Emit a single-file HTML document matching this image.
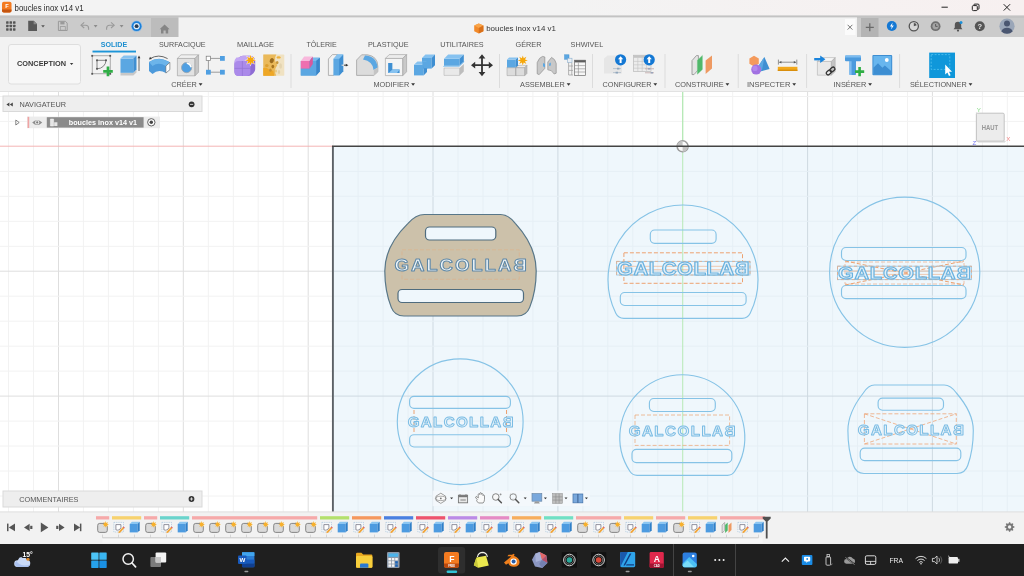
<!DOCTYPE html>
<html lang="fr"><head><meta charset="utf-8"><title>boucles inox v14 v1</title>
<style>
html,body{margin:0;padding:0;background:#fff;}
body{width:1024px;height:576px;overflow:hidden;position:relative;font-family:"Liberation Sans", Arial, sans-serif;}
#app{position:absolute;left:0;top:0;width:1024px;height:576px;overflow:hidden;background:#fff;}
.sec{position:absolute;left:0;width:1024px;}
#titlebar{top:0;height:16px;background:linear-gradient(90deg,#f3f3f3 0%,#f3f3f3 55%,#f7f0f0 100%);}
#tabbar{top:16px;height:21px;background:#cbcbcb;}
#toolbar{top:37px;height:55px;background:#f2f2f2;border-bottom:1px solid #e2e2e2;box-sizing:border-box;}
#canvas{top:92px;height:420px;background:#fff;}
#timeline{top:512px;height:32px;background:#f2f2f2;}
#taskbar{top:544px;height:32px;background:#1f1f1f;}
svg#ov{position:absolute;left:0;top:0;will-change:transform;}
svg text{font-family:"Liberation Sans", Arial, sans-serif;}
</style></head><body>
<div id="app">
<div class="sec" id="titlebar"></div>
<div class="sec" id="tabbar"></div>
<div class="sec" id="toolbar"></div>
<div class="sec" id="canvas"></div>
<div class="sec" id="timeline"></div>
<div class="sec" id="taskbar"></div>
<svg id="ov" width="1024" height="576" viewBox="0 0 1024 576" shape-rendering="auto">

<g id="grid">
<line x1="8.5" y1="92" x2="8.5" y2="512" stroke="#f2f2f2"/>
<line x1="33.5" y1="92" x2="33.5" y2="512" stroke="#f2f2f2"/>
<line x1="58.5" y1="92" x2="58.5" y2="512" stroke="#dedede"/>
<line x1="83.4" y1="92" x2="83.4" y2="512" stroke="#f2f2f2"/>
<line x1="108.4" y1="92" x2="108.4" y2="512" stroke="#f2f2f2"/>
<line x1="133.4" y1="92" x2="133.4" y2="512" stroke="#f2f2f2"/>
<line x1="158.4" y1="92" x2="158.4" y2="512" stroke="#f2f2f2"/>
<line x1="183.3" y1="92" x2="183.3" y2="512" stroke="#dedede"/>
<line x1="208.3" y1="92" x2="208.3" y2="512" stroke="#f2f2f2"/>
<line x1="233.3" y1="92" x2="233.3" y2="512" stroke="#f2f2f2"/>
<line x1="258.2" y1="92" x2="258.2" y2="512" stroke="#f2f2f2"/>
<line x1="283.2" y1="92" x2="283.2" y2="512" stroke="#f2f2f2"/>
<line x1="308.2" y1="92" x2="308.2" y2="512" stroke="#dedede"/>
<line x1="333.2" y1="92" x2="333.2" y2="512" stroke="#f2f2f2"/>
<line x1="358.1" y1="92" x2="358.1" y2="512" stroke="#f2f2f2"/>
<line x1="383.1" y1="92" x2="383.1" y2="512" stroke="#f2f2f2"/>
<line x1="408.1" y1="92" x2="408.1" y2="512" stroke="#f2f2f2"/>
<line x1="433.0" y1="92" x2="433.0" y2="512" stroke="#dedede"/>
<line x1="458.0" y1="92" x2="458.0" y2="512" stroke="#f2f2f2"/>
<line x1="483.0" y1="92" x2="483.0" y2="512" stroke="#f2f2f2"/>
<line x1="507.9" y1="92" x2="507.9" y2="512" stroke="#f2f2f2"/>
<line x1="532.9" y1="92" x2="532.9" y2="512" stroke="#f2f2f2"/>
<line x1="557.9" y1="92" x2="557.9" y2="512" stroke="#dedede"/>
<line x1="582.9" y1="92" x2="582.9" y2="512" stroke="#f2f2f2"/>
<line x1="607.8" y1="92" x2="607.8" y2="512" stroke="#f2f2f2"/>
<line x1="632.8" y1="92" x2="632.8" y2="512" stroke="#f2f2f2"/>
<line x1="657.8" y1="92" x2="657.8" y2="512" stroke="#f2f2f2"/>
<line x1="707.7" y1="92" x2="707.7" y2="512" stroke="#f2f2f2"/>
<line x1="732.7" y1="92" x2="732.7" y2="512" stroke="#f2f2f2"/>
<line x1="757.6" y1="92" x2="757.6" y2="512" stroke="#f2f2f2"/>
<line x1="782.6" y1="92" x2="782.6" y2="512" stroke="#f2f2f2"/>
<line x1="807.6" y1="92" x2="807.6" y2="512" stroke="#dedede"/>
<line x1="832.6" y1="92" x2="832.6" y2="512" stroke="#f2f2f2"/>
<line x1="857.5" y1="92" x2="857.5" y2="512" stroke="#f2f2f2"/>
<line x1="882.5" y1="92" x2="882.5" y2="512" stroke="#f2f2f2"/>
<line x1="907.5" y1="92" x2="907.5" y2="512" stroke="#f2f2f2"/>
<line x1="932.4" y1="92" x2="932.4" y2="512" stroke="#dedede"/>
<line x1="957.4" y1="92" x2="957.4" y2="512" stroke="#f2f2f2"/>
<line x1="982.4" y1="92" x2="982.4" y2="512" stroke="#f2f2f2"/>
<line x1="1007.3" y1="92" x2="1007.3" y2="512" stroke="#f2f2f2"/>
<line x1="0" y1="96.5" x2="1024" y2="96.5" stroke="#f2f2f2"/>
<line x1="0" y1="121.4" x2="1024" y2="121.4" stroke="#f2f2f2"/>
<line x1="0" y1="171.4" x2="1024" y2="171.4" stroke="#f2f2f2"/>
<line x1="0" y1="196.3" x2="1024" y2="196.3" stroke="#f2f2f2"/>
<line x1="0" y1="221.3" x2="1024" y2="221.3" stroke="#f2f2f2"/>
<line x1="0" y1="246.3" x2="1024" y2="246.3" stroke="#f2f2f2"/>
<line x1="0" y1="271.2" x2="1024" y2="271.2" stroke="#dedede"/>
<line x1="0" y1="296.2" x2="1024" y2="296.2" stroke="#f2f2f2"/>
<line x1="0" y1="321.2" x2="1024" y2="321.2" stroke="#f2f2f2"/>
<line x1="0" y1="346.2" x2="1024" y2="346.2" stroke="#f2f2f2"/>
<line x1="0" y1="371.1" x2="1024" y2="371.1" stroke="#f2f2f2"/>
<line x1="0" y1="396.1" x2="1024" y2="396.1" stroke="#dedede"/>
<line x1="0" y1="421.1" x2="1024" y2="421.1" stroke="#f2f2f2"/>
<line x1="0" y1="446.0" x2="1024" y2="446.0" stroke="#f2f2f2"/>
<line x1="0" y1="471.0" x2="1024" y2="471.0" stroke="#f2f2f2"/>
<line x1="0" y1="496.0" x2="1024" y2="496.0" stroke="#f2f2f2"/>
<line x1="0" y1="146.2" x2="333" y2="146.2" stroke="#f4b4b4"/>
<line x1="682.7" y1="92" x2="682.7" y2="147" stroke="#b4e8b4" stroke-width="1.3"/>
</g>
<rect x="333" y="146" width="700" height="366" fill="#eff7fc"/>
<g>
<line x1="358.1" y1="147" x2="358.1" y2="512" stroke="#e6eff5"/>
<line x1="383.1" y1="147" x2="383.1" y2="512" stroke="#e6eff5"/>
<line x1="408.1" y1="147" x2="408.1" y2="512" stroke="#e6eff5"/>
<line x1="433.0" y1="147" x2="433.0" y2="512" stroke="#ced9e1"/>
<line x1="458.0" y1="147" x2="458.0" y2="512" stroke="#e6eff5"/>
<line x1="483.0" y1="147" x2="483.0" y2="512" stroke="#e6eff5"/>
<line x1="507.9" y1="147" x2="507.9" y2="512" stroke="#e6eff5"/>
<line x1="532.9" y1="147" x2="532.9" y2="512" stroke="#e6eff5"/>
<line x1="557.9" y1="147" x2="557.9" y2="512" stroke="#ced9e1"/>
<line x1="582.9" y1="147" x2="582.9" y2="512" stroke="#e6eff5"/>
<line x1="607.8" y1="147" x2="607.8" y2="512" stroke="#e6eff5"/>
<line x1="632.8" y1="147" x2="632.8" y2="512" stroke="#e6eff5"/>
<line x1="657.8" y1="147" x2="657.8" y2="512" stroke="#e6eff5"/>
<line x1="707.7" y1="147" x2="707.7" y2="512" stroke="#e6eff5"/>
<line x1="732.7" y1="147" x2="732.7" y2="512" stroke="#e6eff5"/>
<line x1="757.6" y1="147" x2="757.6" y2="512" stroke="#e6eff5"/>
<line x1="782.6" y1="147" x2="782.6" y2="512" stroke="#e6eff5"/>
<line x1="807.6" y1="147" x2="807.6" y2="512" stroke="#ced9e1"/>
<line x1="832.6" y1="147" x2="832.6" y2="512" stroke="#e6eff5"/>
<line x1="857.5" y1="147" x2="857.5" y2="512" stroke="#e6eff5"/>
<line x1="882.5" y1="147" x2="882.5" y2="512" stroke="#e6eff5"/>
<line x1="907.5" y1="147" x2="907.5" y2="512" stroke="#e6eff5"/>
<line x1="932.4" y1="147" x2="932.4" y2="512" stroke="#ced9e1"/>
<line x1="957.4" y1="147" x2="957.4" y2="512" stroke="#e6eff5"/>
<line x1="982.4" y1="147" x2="982.4" y2="512" stroke="#e6eff5"/>
<line x1="1007.3" y1="147" x2="1007.3" y2="512" stroke="#e6eff5"/>
<line x1="334" y1="171.4" x2="1024" y2="171.4" stroke="#e6eff5"/>
<line x1="334" y1="196.3" x2="1024" y2="196.3" stroke="#e6eff5"/>
<line x1="334" y1="221.3" x2="1024" y2="221.3" stroke="#e6eff5"/>
<line x1="334" y1="246.3" x2="1024" y2="246.3" stroke="#e6eff5"/>
<line x1="334" y1="271.2" x2="1024" y2="271.2" stroke="#ced9e1"/>
<line x1="334" y1="296.2" x2="1024" y2="296.2" stroke="#e6eff5"/>
<line x1="334" y1="321.2" x2="1024" y2="321.2" stroke="#e6eff5"/>
<line x1="334" y1="346.2" x2="1024" y2="346.2" stroke="#e6eff5"/>
<line x1="334" y1="371.1" x2="1024" y2="371.1" stroke="#e6eff5"/>
<line x1="334" y1="396.1" x2="1024" y2="396.1" stroke="#ced9e1"/>
<line x1="334" y1="421.1" x2="1024" y2="421.1" stroke="#e6eff5"/>
<line x1="334" y1="446.0" x2="1024" y2="446.0" stroke="#e6eff5"/>
<line x1="334" y1="471.0" x2="1024" y2="471.0" stroke="#e6eff5"/>
<line x1="334" y1="496.0" x2="1024" y2="496.0" stroke="#e6eff5"/>
<line x1="682.7" y1="147" x2="682.7" y2="512" stroke="#bbeabb" stroke-width="1.1"/>
</g>
<path d="M332.9,512 V146" fill="none" stroke="#5c6166" stroke-width="1.9"/>
<circle cx="682.6" cy="146.3" r="5.5" fill="#fbfbfb" stroke="#9c9c9c" stroke-width="1.5"/><path d="M682.6,146.3 v-5.5 a5.5,5.5 0 0 0 -5.5,5.5 z M682.6,146.3 v5.5 a5.5,5.5 0 0 0 5.5,-5.500 z" fill="#c4c4c4"/>
<path d="M332,146.3 H1024" fill="none" stroke="#444" stroke-width="1.6"/>
<path d="M424.5,214.5 L500.5,214.5 C506.9,214.5 511.2,218.1 515.5,223.6 C527.6,236.8 536.2,252.1 536.2,271.0 C536.2,287.2 533.1,298.9 529.7,307.4 C527.8,312.4 523.5,316.0 517.0,316.0 L404.0,316.0 C397.5,316.0 393.2,312.4 391.3,307.4 C387.9,298.9 384.8,287.2 384.8,271.0 C384.8,252.1 394.3,236.8 407.8,223.6 C412.6,218.1 417.4,214.5 424.5,214.5 Z" fill="#ccc1aa" stroke="#587789" stroke-width="1.2"/>
<rect x="402" y="249.8" width="117.3" height="29.5" fill="none" stroke="#eda271" stroke-width="1" stroke-dasharray="4 2" opacity="0.35"/>
<rect x="425.5" y="227" width="70.3" height="13.0" rx="4" fill="#eff7fc" stroke="#4f6c7e" stroke-width="1.2"/>
<rect x="398" y="289.5" width="125.5" height="13.0" rx="4" fill="#eff7fc" stroke="#4f6c7e" stroke-width="1.2"/>
<text x="0" y="0" transform="translate(394.5,271.0) scale(1.1,1)" letter-spacing="1.77" font-size="16.90" font-weight="bold" fill="#eef5f9" stroke="#5f88a6" stroke-width="1.0" stroke-linejoin="round">GALCOLLA</text>
<text x="0" y="0" transform="translate(526.8,271.0) scale(-1.1,1)" font-size="16.90" font-weight="bold" fill="#eef5f9" stroke="#5f88a6" stroke-width="1.0" stroke-linejoin="round">B</text>
<path d="M623.9,318.3 L742.1,318.3 A9,9 0 0 0 750.2,313.3 A75,75 0 1 0 615.8,313.3 A9,9 0 0 0 623.9,318.3 Z" fill="none" stroke="#86c3e6" stroke-width="1.15"/>
<rect x="650.3" y="230" width="65.8" height="13.3" rx="4.4" fill="none" stroke="#86c3e6" stroke-width="1.15"/>
<rect x="620.3" y="292.5" width="125.8" height="13.0" rx="4.4" fill="none" stroke="#86c3e6" stroke-width="1.15"/>
<rect x="623.9" y="252.8" width="118.6" height="30.5" fill="none" stroke="#eda271" stroke-width="1" stroke-dasharray="4 2" opacity="1"/>
<rect x="616.6" y="261.4" width="133.4" height="13.6" fill="none" stroke="#9ccbe8" stroke-width="0.9"/>
<rect x="616.6" y="261.4" width="133.4" height="13.6" fill="none" stroke="#e4ae8c" stroke-width="0.9" stroke-dasharray="3 2.5"/>
<path d="M625.1,266.3 H739.5 M637.1,269.7 H727.5" stroke="#eda271" stroke-width="0.6" fill="none" opacity="0.9"/>
<text x="0" y="0" transform="translate(617.1,274.5) scale(1.17,1)" letter-spacing="0.39" font-size="17.53" font-weight="bold" fill="#e0eef7" stroke="#6ab2df" stroke-width="1.05" stroke-linejoin="round">GALCOLLA</text>
<text x="0" y="0" transform="translate(749.5,274.5) scale(-1.17,1)" font-size="17.53" font-weight="bold" fill="#e0eef7" stroke="#6ab2df" stroke-width="1.05" stroke-linejoin="round">B</text>
<circle cx="904.7" cy="272.3" r="75.1" fill="none" stroke="#86c3e6" stroke-width="1.15"/>
<rect x="841.5" y="247.5" width="124.5" height="13.0" rx="4.4" fill="none" stroke="#86c3e6" stroke-width="1.15"/>
<rect x="841.5" y="285.5" width="124.5" height="13.1" rx="4.4" fill="none" stroke="#86c3e6" stroke-width="1.15"/>
<rect x="845" y="262" width="119.0" height="22.0" fill="none" stroke="#eda271" stroke-width="1" stroke-dasharray="4 2" opacity="0.6"/>
<path d="M845,261 L964,285 M845,285 L964,261" fill="none" stroke="#eda271" stroke-width="1" stroke-dasharray="4 2"/>
<rect x="837.5" y="266.2" width="134.0" height="13.4" fill="none" stroke="#9ccbe8" stroke-width="0.9"/>
<rect x="837.5" y="266.2" width="134.0" height="13.4" fill="none" stroke="#e4ae8c" stroke-width="0.9" stroke-dasharray="3 2.5"/>
<path d="M846.0,271.0 H961.0 M858.0,274.4 H949.0" stroke="#eda271" stroke-width="0.6" fill="none" opacity="0.9"/>
<text x="0" y="0" transform="translate(838.0,279.1) scale(1.17,1)" letter-spacing="0.67" font-size="17.25" font-weight="bold" fill="#e0eef7" stroke="#6ab2df" stroke-width="1.05" stroke-linejoin="round">GALCOLLA</text>
<text x="0" y="0" transform="translate(971.0,279.1) scale(-1.17,1)" font-size="17.25" font-weight="bold" fill="#e0eef7" stroke="#6ab2df" stroke-width="1.05" stroke-linejoin="round">B</text>
<circle cx="460.2" cy="421.7" r="62.9" fill="none" stroke="#86c3e6" stroke-width="1.15"/>
<rect x="409.6" y="396.4" width="100.8" height="12.0" rx="4.4" fill="none" stroke="#86c3e6" stroke-width="1.15"/>
<rect x="409.6" y="434.7" width="100.8" height="12.3" rx="4.4" fill="none" stroke="#86c3e6" stroke-width="1.15"/>
<path d="M414,410 V433 M506.5,410 V433" fill="none" stroke="#eda271" stroke-width="1" stroke-dasharray="4 2"/>
<text x="0" y="0" transform="translate(407.7,427.2) scale(1.04,1)" letter-spacing="1.27" font-size="14.59" font-weight="bold" fill="#e6f2f9" stroke="#7abce4" stroke-width="0.95" stroke-linejoin="round">GALCOLLA</text>
<text x="0" y="0" transform="translate(513.5,427.2) scale(-1.04,1)" font-size="14.59" font-weight="bold" fill="#e6f2f9" stroke="#7abce4" stroke-width="0.95" stroke-linejoin="round">B</text>
<path d="M637.1,475.3 L727.5,475.3 A8.5,8.5 0 0 0 734.6,471.5 A62.5,62.5 0 1 0 630.0,471.5 A8.5,8.5 0 0 0 637.1,475.3 Z" fill="none" stroke="#86c3e6" stroke-width="1.15"/>
<rect x="649.4" y="398.5" width="65.9" height="13.0" rx="4.4" fill="none" stroke="#86c3e6" stroke-width="1.15"/>
<rect x="632" y="449.3" width="99.8" height="13.4" rx="4.4" fill="none" stroke="#86c3e6" stroke-width="1.15"/>
<rect x="635" y="415" width="94.6" height="30.4" fill="none" stroke="#eda271" stroke-width="1" stroke-dasharray="4 2" opacity="0.7"/>
<text x="0" y="0" transform="translate(628.7,435.7) scale(1.04,1)" letter-spacing="1.39" font-size="14.59" font-weight="bold" fill="#e6f2f9" stroke="#7abce4" stroke-width="0.95" stroke-linejoin="round">GALCOLLA</text>
<text x="0" y="0" transform="translate(735.5,435.7) scale(-1.04,1)" font-size="14.59" font-weight="bold" fill="#e6f2f9" stroke="#7abce4" stroke-width="0.95" stroke-linejoin="round">B</text>
<path d="M874.4,385.0 L944.2,385.0 C949.4,385.0 952.9,388.1 956.4,393.0 C966.3,404.5 973.3,417.7 973.3,430.4 C973.3,445.9 970.7,457.1 967.8,465.3 C966.2,470.1 962.7,473.5 957.2,473.5 L864.0,473.5 C858.5,473.5 855.0,470.1 853.4,465.3 C850.5,457.1 847.9,445.9 847.9,430.4 C847.9,417.7 854.3,404.5 863.3,393.0 C866.4,388.1 869.6,385.0 874.4,385.0 Z" fill="none" stroke="#86c3e6" stroke-width="1.15"/>
<rect x="878.1" y="398.1" width="65.4" height="12.1" rx="4.4" fill="none" stroke="#86c3e6" stroke-width="1.15"/>
<rect x="860.2" y="448.1" width="100.6" height="12.5" rx="4.4" fill="none" stroke="#86c3e6" stroke-width="1.15"/>
<rect x="864.4" y="413.8" width="91.9" height="30.2" fill="none" stroke="#eda271" stroke-width="1" stroke-dasharray="4 2" opacity="0.75"/><path d="M864.4,413.8 L956.3,444 M864.4,444 L956.3,413.8" fill="none" stroke="#eda271" stroke-width="1" stroke-dasharray="4 2" opacity="0.75"/>
<text x="0" y="0" transform="translate(857.8,434.9) scale(1.04,1)" letter-spacing="1.31" font-size="14.59" font-weight="bold" fill="#e6f2f9" stroke="#7abce4" stroke-width="0.95" stroke-linejoin="round">GALCOLLA</text>
<text x="0" y="0" transform="translate(963.9,434.9) scale(-1.04,1)" font-size="14.59" font-weight="bold" fill="#e6f2f9" stroke="#7abce4" stroke-width="0.95" stroke-linejoin="round">B</text>
<rect x="2" y="1.8" width="9.5" height="10.8" rx="1.8" fill="#f47b20"/>
<path d="M2,9.6 h9.5 v1.2 a1.8,1.8 0 0 1 -1.8,1.8 h-5.9 a1.8,1.8 0 0 1 -1.8,-1.8 z" fill="#c4540f"/>
<text x="5.2" y="8.3" font-size="5.6" fill="#fff" font-weight="bold" text-anchor="start" >F</text>
<text x="14.6" y="10.7" font-size="9.2" fill="#2a2a2a" font-weight="normal" text-anchor="start" textLength="69" lengthAdjust="spacingAndGlyphs" >boucles inox v14 v1</text>
<path d="M941.5,7.2 h6.3" stroke="#222" stroke-width="1" fill="none"/>
<rect x="972.3" y="5.6" width="5" height="5" rx="1" fill="none" stroke="#222" stroke-width="1"/>
<path d="M973.8,5.4 v-0.3 a1,1 0 0 1 1,-1 h3.2 a1,1 0 0 1 1,1 v3.2 a1,1 0 0 1 -1,1 h-0.4" fill="none" stroke="#222" stroke-width="1"/>
<path d="M1003.7,4.2 l6.4,6.4 M1010.1,4.2 l-6.4,6.4" stroke="#222" stroke-width="1" fill="none"/>
<rect x="0" y="15.4" width="1024" height="2.4" fill="#c3c3c3"/>
<rect x="151" y="18" width="28" height="19" fill="#bcbcbc"/>
<rect x="178.5" y="17.4" width="678.5" height="19.6" fill="#f2f2f2"/>
<rect x="6.10" y="21.30" width="2.5" height="2.5" rx="0.4" fill="#555"/>
<rect x="6.10" y="24.75" width="2.5" height="2.5" rx="0.4" fill="#555"/>
<rect x="6.10" y="28.20" width="2.5" height="2.5" rx="0.4" fill="#555"/>
<rect x="9.55" y="21.30" width="2.5" height="2.5" rx="0.4" fill="#555"/>
<rect x="9.55" y="24.75" width="2.5" height="2.5" rx="0.4" fill="#555"/>
<rect x="9.55" y="28.20" width="2.5" height="2.5" rx="0.4" fill="#555"/>
<rect x="13.00" y="21.30" width="2.5" height="2.5" rx="0.4" fill="#555"/>
<rect x="13.00" y="24.75" width="2.5" height="2.5" rx="0.4" fill="#555"/>
<rect x="13.00" y="28.20" width="2.5" height="2.5" rx="0.4" fill="#555"/>
<path d="M28.2,20.8 h5.6 l3.2,3.2 v7 h-8.8 z" fill="#595959"/><path d="M33.6,20.8 v3.4 h3.4 z" fill="#8a8a8a"/>
<path d="M41.2,25.2 h3.6 l-1.8,2.2 z" fill="#555"/>
<path d="M58.4,21.3 h7 l1.8,1.8 v7.4 h-8.8 z" fill="none" stroke="#9a9a9a" stroke-width="1"/><rect x="60.3" y="21.6" width="4.2" height="2.8" fill="#9a9a9a"/><rect x="60.3" y="26.6" width="5" height="3.6" fill="none" stroke="#9a9a9a" stroke-width="0.8"/>
<path d="M81.6,25.2 h4 a3,3 0 0 1 3,3 v1.6" fill="none" stroke="#9a9a9a" stroke-width="1.1"/><path d="M84.2,22.4 l-3.2,2.8 l3.2,2.8" fill="none" stroke="#9a9a9a" stroke-width="1.1"/>
<path d="M93.69999999999999,25.1 h3.8 l-1.9,2.4 z" fill="#8c8c8c"/>
<path d="M113.6,25.2 h-4 a3,3 0 0 0 -3,3 v1.6" fill="none" stroke="#9a9a9a" stroke-width="1.1"/><path d="M111,22.4 l3.2,2.8 l-3.2,2.8" fill="none" stroke="#9a9a9a" stroke-width="1.1"/>
<path d="M119.69999999999999,25.1 h3.8 l-1.9,2.4 z" fill="#8c8c8c"/>
<circle cx="136.6" cy="26.2" r="5.6" fill="#7ab8ee" opacity="0.7"/><circle cx="136.6" cy="26.2" r="4.9" fill="#1b7fd8"/><circle cx="136.6" cy="26.2" r="3.1" fill="#dfeefa"/><circle cx="136.6" cy="26.2" r="1.9" fill="#2a3f55"/>
<path d="M159.6,29.2 l5,-4.6 l5,4.600 h-1.400 v4.200 h-2.500 v-2.800 h-2.200 v2.800 h-2.500 v-4.200 z" fill="#858585"/>
<path d="M478.8,23.4 l4.6,2.2 v5.6 l-4.6,2.4 l-4.6,-2.4 v-5.6 z" fill="#f28a2a"/><path d="M478.8,23.4 l4.6,2.2 l-4.6,2.3 l-4.6,-2.3 z" fill="#f9a54a"/><path d="M478.8,27.9 l4.6,-2.3 v5.6 l-4.6,2.4 z" fill="#d9701a"/>
<text x="486.2" y="30.9" font-size="8" fill="#333" font-weight="normal" text-anchor="start" textLength="69.8" lengthAdjust="spacingAndGlyphs" >boucles inox v14 v1</text>
<rect x="845" y="19" width="10.5" height="16" fill="#fbfbfb"/>
<path d="M847.6,24.8 l4.8,4.8 M852.4,24.8 l-4.8,4.8" stroke="#555" stroke-width="0.8" fill="none"/>
<rect x="861" y="18" width="17.5" height="19" fill="#b4b4b4"/>
<path d="M865.8,27.3 h8 M869.8,23.3 v8" stroke="#6a6a6a" stroke-width="1.3" fill="none"/>
<circle cx="891.8" cy="26" r="5" fill="#1478d4"/><path d="M892.6,22.6 l-2.6,3.8 h1.8 l-0.8,3 l2.8,-4 h-1.8 z" fill="#fff"/>
<circle cx="913.8" cy="26.2" r="4.6" fill="#d8d8d8" stroke="#555" stroke-width="1.3"/><path d="M913.8,23 a3.2,3.2 0 0 1 3,2.2 l-3,1 z" fill="#555"/>
<circle cx="935.6" cy="26.2" r="4.9" fill="#707070"/><circle cx="935.6" cy="26.2" r="3.1" fill="#a4a4a4"/><path d="M935.6,24 v2.4 h2" stroke="#555" stroke-width="0.9" fill="none"/>
<path d="M958,21.8 a3.2,3.2 0 0 1 3.2,3.2 v2.6 l1.2,1.6 h-8.8 l1.2,-1.6 v-2.6 a3.2,3.2 0 0 1 3.2,-3.2 z" fill="#555"/><circle cx="958" cy="30.6" r="1.1" fill="#555"/><circle cx="961" cy="22.4" r="1.5" fill="#1b8fd8"/>
<circle cx="979.8" cy="26.2" r="5" fill="#555"/>
<text x="979.8" y="29" font-size="7.5" fill="#e8e8e8" font-weight="bold" text-anchor="middle" >?</text>
<circle cx="1007" cy="26.2" r="7.6" fill="#9aa6b8"/><circle cx="1007" cy="23.6" r="3" fill="#4a5670"/><path d="M1001.4,31.4 a5.8,5 0 0 1 11.2,0 a7.6,7.6 0 0 1 -11.2,0 z" fill="#4a5670"/>
<rect x="8.5" y="44.5" width="72" height="39.5" rx="2.5" fill="#f7f7f7" stroke="#dedede" stroke-width="1"/>
<text x="17" y="66.2" font-size="7.4" fill="#3a3a3a" font-weight="bold" text-anchor="start" textLength="49" lengthAdjust="spacingAndGlyphs" >CONCEPTION</text>
<path d="M69.89999999999999,62.9 h3.4 l-1.7,2.2 z" fill="#3a3a3a"/>
<text x="100.8" y="47" font-size="7.4" fill="#1d8fcf" font-weight="bold" text-anchor="start" textLength="26.4" lengthAdjust="spacingAndGlyphs" >SOLIDE</text>
<rect x="92.5" y="50.6" width="43.5" height="1.9" fill="#1d95d8"/>
<text x="159" y="47" font-size="7.4" fill="#555" font-weight="normal" text-anchor="start" textLength="46.6" lengthAdjust="spacingAndGlyphs" >SURFACIQUE</text>
<text x="237" y="47" font-size="7.4" fill="#555" font-weight="normal" text-anchor="start" textLength="37" lengthAdjust="spacingAndGlyphs" >MAILLAGE</text>
<text x="306.5" y="47" font-size="7.4" fill="#555" font-weight="normal" text-anchor="start" textLength="30.3" lengthAdjust="spacingAndGlyphs" >TÔLERIE</text>
<text x="368" y="47" font-size="7.4" fill="#555" font-weight="normal" text-anchor="start" textLength="40.6" lengthAdjust="spacingAndGlyphs" >PLASTIQUE</text>
<text x="440.2" y="47" font-size="7.4" fill="#555" font-weight="normal" text-anchor="start" textLength="43.4" lengthAdjust="spacingAndGlyphs" >UTILITAIRES</text>
<text x="515.5" y="47" font-size="7.4" fill="#555" font-weight="normal" text-anchor="start" textLength="25.9" lengthAdjust="spacingAndGlyphs" >GÉRER</text>
<text x="570.6" y="47" font-size="7.4" fill="#555" font-weight="normal" text-anchor="start" textLength="32.6" lengthAdjust="spacingAndGlyphs" >SHWIVEL</text>
<text x="171.2" y="87" font-size="7.4" fill="#555" font-weight="normal" text-anchor="start" textLength="25.6" lengthAdjust="spacingAndGlyphs" >CRÉER</text>
<path d="M198.70000000000002,83.3 h3.8 l-1.9,2.4 z" fill="#333"/>
<text x="373.5" y="87" font-size="7.4" fill="#555" font-weight="normal" text-anchor="start" textLength="35.8" lengthAdjust="spacingAndGlyphs" >MODIFIER</text>
<path d="M411.20000000000005,83.3 h3.8 l-1.9,2.4 z" fill="#333"/>
<text x="520" y="87" font-size="7.4" fill="#555" font-weight="normal" text-anchor="start" textLength="44.8" lengthAdjust="spacingAndGlyphs" >ASSEMBLER</text>
<path d="M566.6999999999999,83.3 h3.8 l-1.9,2.4 z" fill="#333"/>
<text x="602.5" y="87" font-size="7.4" fill="#555" font-weight="normal" text-anchor="start" textLength="49.0" lengthAdjust="spacingAndGlyphs" >CONFIGURER</text>
<path d="M653.4,83.3 h3.8 l-1.9,2.4 z" fill="#333"/>
<text x="675" y="87" font-size="7.4" fill="#555" font-weight="normal" text-anchor="start" textLength="48.6" lengthAdjust="spacingAndGlyphs" >CONSTRUIRE</text>
<path d="M725.5,83.3 h3.8 l-1.9,2.4 z" fill="#333"/>
<text x="747" y="87" font-size="7.4" fill="#555" font-weight="normal" text-anchor="start" textLength="43.4" lengthAdjust="spacingAndGlyphs" >INSPECTER</text>
<path d="M792.3,83.3 h3.8 l-1.9,2.4 z" fill="#333"/>
<text x="833.5" y="87" font-size="7.4" fill="#555" font-weight="normal" text-anchor="start" textLength="32.8" lengthAdjust="spacingAndGlyphs" >INSÉRER</text>
<path d="M868.1999999999999,83.3 h3.8 l-1.9,2.4 z" fill="#333"/>
<text x="910" y="87" font-size="7.4" fill="#555" font-weight="normal" text-anchor="start" textLength="56.7" lengthAdjust="spacingAndGlyphs" >SÉLECTIONNER</text>
<path d="M968.6,83.3 h3.8 l-1.9,2.4 z" fill="#333"/>
<rect x="290.5" y="54" width="1" height="34" fill="#dcdcdc"/>
<rect x="499.0" y="54" width="1" height="34" fill="#dcdcdc"/>
<rect x="592.0" y="54" width="1" height="34" fill="#dcdcdc"/>
<rect x="664.5" y="54" width="1" height="34" fill="#dcdcdc"/>
<rect x="737.7" y="54" width="1" height="34" fill="#dcdcdc"/>
<rect x="806.1" y="54" width="1" height="34" fill="#dcdcdc"/>
<rect x="899.1" y="54" width="1" height="34" fill="#dcdcdc"/>
<rect x="92.2" y="55.8" width="18" height="18" fill="none" stroke="#8a8a8a" stroke-width="0.7"/>
<rect x="91.3" y="54.9" width="1.8" height="1.8" fill="#555"/>
<rect x="109.3" y="54.9" width="1.8" height="1.8" fill="#555"/>
<rect x="91.3" y="72.89999999999999" width="1.8" height="1.8" fill="#555"/>
<rect x="109.3" y="72.89999999999999" width="1.8" height="1.8" fill="#555"/>
<path d="M97,60.3 H106 A9,8.6 0 0 1 97,68.8 Z" fill="none" stroke="#666" stroke-width="0.8"/>
<rect x="96.1" y="59.4" width="1.8" height="1.8" fill="#555"/>
<rect x="105.1" y="59.4" width="1.8" height="1.8" fill="#555"/>
<rect x="96.1" y="67.89999999999999" width="1.8" height="1.8" fill="#555"/>
<path d="M103.2,70.05000000000001 h3.4499999999999997 v-3.4499999999999997 h2.7 v3.4499999999999997 h3.4499999999999997 v2.7 h-3.4499999999999997 v3.4499999999999997 h-2.7 v-3.4499999999999997 h-3.4499999999999997 z" fill="#2fae45"/>
<path d="M120.5,72.8 h12.8 l3.2,-3 v2.8 l-3.2,3 h-12.8 z" fill="#c8c8c8"/>
<path d="M120.5,58.6 h12.8 v14.2 h-12.8 z" fill="#5ba7e2"/><path d="M120.5,58.6 l3.2,-3.2 h12.8 l-3.2,3.2 z" fill="#86c2f0"/><path d="M133.3,58.6 l3.2,-3.2 v14.2 l-3.2,3.2 z" fill="#3f8fd2"/>
<path d="M139,57.5 v13.5" stroke="#444" stroke-width="0.8"/><path d="M137.6,58.2 l1.4,-2.6 l1.4,2.6 z" fill="#333"/>
<path d="M149,62 Q158.5,56 168.5,61.5 l1.4,1 v7.2 l-4,3.4 Q158.5,68.6 152.5,74 L149,71 z" fill="#4d9adb"/>
<path d="M149,62 Q158.5,55.6 169.9,62.4 L165.9,66 Q158.5,61.4 152.5,66 z" fill="#6cb4ea"/>
<path d="M165.9,66 l4,-3.6 v7.3 l-4,3.4 z" fill="#fff" stroke="#666" stroke-width="0.6"/>
<path d="M150.2,58.6 Q158.5,53.6 167.6,58.6" fill="none" stroke="#444" stroke-width="0.8"/><path d="M149,59.6 l1,-2.8 l1.9,2.1 z" fill="#333"/>
<path d="M177.4,58.4 h17.599999999999998 v17.4 h-17.599999999999998 z" fill="#e2e2e2" stroke="#9c9c9c" stroke-width="0.6" stroke-linejoin="round"/><path d="M177.4,58.4 l3.6,-3.6 h17.599999999999998 l-3.6,3.6 z" fill="#f0f0f0" stroke="#9c9c9c" stroke-width="0.6" stroke-linejoin="round"/><path d="M195.0,58.4 l3.6,-3.6 v17.4 l-3.6,3.6 z" fill="#c6c6c6" stroke="#9c9c9c" stroke-width="0.6" stroke-linejoin="round"/>
<circle cx="186.6" cy="67.6" r="5.1" fill="#4f9fe2" stroke="#98a4ae" stroke-width="0.8"/><path d="M186.8,63.200 a4.6,4.6 0 0 1 4.400,4 a6.500,6.500 0 0 0 -4.400,-4 z" fill="#fff" stroke="#fff" stroke-width="1.3"/>
<path d="M208.4,58.4 H222.4 M208.4,58.4 V72.2 H222.4" fill="none" stroke="#777" stroke-width="0.7"/>
<rect x="206.2" y="56.2" width="4.4" height="4.4" fill="#fff" stroke="#777" stroke-width="0.7"/>
<rect x="220.0" y="56.0" width="4.8" height="4.8" fill="#4f9fe2"/>
<rect x="206.0" y="69.8" width="4.8" height="4.8" fill="#4f9fe2"/>
<rect x="220.0" y="69.8" width="4.8" height="4.8" fill="#4f9fe2"/>
<path d="M239,57.400 q1.600,-1.600 4,-1.600 h7 q5,0.400 5.200,5.400 v8 q0,2.400 -1.800,4 l-2.400,2 q-1.400,0.800 -3,0.800 h-9.400 q-4,-0.200 -4.200,-4.200 v-8.400 q0,-2.600 1.800,-4.400 z" fill="#8e6cd4"/>
<path d="M239,57.400 q1.600,-1.600 4,-1.600 h7 q4,0.300 5,3.800 l-4.600,4 h-15.800 v-1.800 q0,-2.600 1.800,-4.400 z" fill="#c2a6f4"/>
<path d="M234.600,64.600 q0.200,-3.400 3.600,-3.600 h8.400 q3.600,0.200 3.800,3.600 v7.800 q-0.200,3.400 -3.800,3.600 h-8.400 q-3.400,-0.200 -3.600,-3.600 z" fill="#ab8aea"/>
<path d="M242.400,61 V76 M234.600,68.400 H250.400" stroke="#9474d6" stroke-width="0.7" fill="none"/>
<polygon points="250.60,54.00 251.71,57.52 254.98,55.82 253.28,59.09 256.80,60.20 253.28,61.31 254.98,64.58 251.71,62.88 250.60,66.40 249.49,62.88 246.22,64.58 247.92,61.31 244.40,60.20 247.92,59.09 246.22,55.82 249.49,57.52" fill="#fff"/>
<polygon points="250.60,54.80 251.56,57.89 254.42,56.38 252.91,59.24 256.00,60.20 252.91,61.16 254.42,64.02 251.56,62.51 250.60,65.60 249.64,62.51 246.78,64.02 248.29,61.16 245.20,60.20 248.29,59.24 246.78,56.38 249.64,57.89" fill="#f6a70a"/>
<rect x="263.3" y="54.6" width="21" height="21.200" rx="0.8" fill="#f0e2c2"/>
<path d="M263.300,54.600 h13 q-3,5 1,10.600 q-4,5 -1,10.600 h-13 z" fill="#eab95a"/>
<path d="M263.300,68 q3,-1 5,1 t5,1.600 l1,5.200 h-11 z" fill="#eea726"/>
<ellipse cx="271.8" cy="60.6" rx="2" ry="2.600" fill="#9a6a1e" transform="rotate(25 271.8 60.6)"/><ellipse cx="272.8" cy="66.6" rx="1.400" ry="1.800" fill="#a8741e"/><ellipse cx="277.2" cy="62.6" rx="1.300" ry="1.600" fill="#c8983e"/><ellipse cx="278.6" cy="57.4" rx="2" ry="1.200" fill="#ecb03c"/><ellipse cx="266.800" cy="65.6" rx="1.800" ry="1.600" fill="#dda030"/><ellipse cx="270.400" cy="70.2" rx="1.300" ry="1.600" fill="#c89030"/><ellipse cx="280.600" cy="66" rx="1.400" ry="2.800" fill="#e4d4b0"/><ellipse cx="279" cy="72" rx="1.200" ry="2" fill="#e0cfa8"/><ellipse cx="276" cy="71" rx="1" ry="1.600" fill="#e8c880"/>
<path d="M300.8,61 h3.2 l3.4,-3.2 h12.4 v13.8 l-3.6,3.8 h-15.4 z" fill="#4a98da"/>
<path d="M309.6,61 l3.4,-3.2 h6.8 l-3.6,3.2 z" fill="#78baee"/><path d="M316.2,61 l3.6,-3.2 v13.8 l-3.6,3.8 z" fill="#3a86c8"/><path d="M300.8,68.6 h8.8 v-7.6 h6.6 v14.4 h-15.4 z" fill="#5ba7e2"/>
<path d="M300.8,61 l3.4,-4.4 h8.6 l-3.2,4.4 z" fill="#f8b8dc"/><rect x="300.8" y="61" width="8.8" height="7.6" fill="#ee6fb0"/><path d="M309.6,61 l3.2,-4.4 v7.4 l-3.2,4.6 z" fill="#d8589c"/>
<path d="M328.4,59 l4,-4.4 h5 v17 l-4,3.8 h-5 z" fill="#f2f2f2" stroke="#999" stroke-width="0.7"/>
<path d="M333.4,59 l4,-4.4 h5.8 v16.6 l-4,4.2 h-5.8 z" fill="#5ba7e2"/><path d="M339.2,58.8 l4,-4.2 v16.6 l-4,4.2 z" fill="#3f8fd2"/><path d="M333.4,59 l4,-4.4 h5.8 l-4,4.2 z" fill="#86c2f0"/>
<path d="M341.6,65.2 h4" stroke="#ddd" stroke-width="1.2"/><path d="M344,65.2 h2.6" stroke="#333" stroke-width="0.9"/><path d="M345.8,63.8 l2.6,1.4 l-2.6,1.4 z" fill="#333"/>
<path d="M356.6,60 l5,-5.2 h6 q10,1.6 10.2,11.4 v5.6 l-4,3.6 h-17.2 z" fill="#dcdcdc" stroke="#9a9a9a" stroke-width="0.7" stroke-linejoin="round"/>
<path d="M365,55.4 q11.6,0.6 12.6,12 l-4,2.6 q-0.8,-8.6 -10.6,-10.4 z" fill="#5ba7e2"/>
<path d="M373.8,70 l4,-2.6 v4.4 l-4,3.6 z" fill="#c4c4c4"/>
<path d="M385.4,58.4 h17.4 v17.2 h-17.4 z" fill="#f4f4f4" stroke="#9c9c9c" stroke-width="0.6" stroke-linejoin="round"/><path d="M385.4,58.4 l3.8,-3.8 h17.4 l-3.8,3.8 z" fill="#ececec" stroke="#9c9c9c" stroke-width="0.6" stroke-linejoin="round"/><path d="M402.79999999999995,58.4 l3.8,-3.8 v17.2 l-3.8,3.8 z" fill="#c9c9c9" stroke="#9c9c9c" stroke-width="0.6" stroke-linejoin="round"/>
<path d="M388.4,63 h3.8 v6.4 h7.4 v3.6 h-11.2 z" fill="#3f8fd2"/><path d="M392.2,69.4 h7.4 l-2.6,3.6 h-8.6 z" fill="#86c2f0"/><path d="M388.4,63 h3.8 v6.4 l-3.8,3.6z" fill="#3f8fd2"/>
<path d="M422,58.0 h9.6 v10.6 h-9.6 z" fill="#5ba7e2"/><path d="M422,58.0 l3.4,-3.4 h9.6 l-3.4,3.4 z" fill="#86c2f0"/><path d="M431.6,58.0 l3.4,-3.4 v10.6 l-3.4,3.4 z" fill="#3f8fd2"/>
<path d="M414,64.8 h9.6 v10.6 h-9.6 z" fill="#5ba7e2"/><path d="M414,64.8 l3.4,-3.4 h9.6 l-3.4,3.4 z" fill="#86c2f0"/><path d="M423.6,64.8 l3.4,-3.4 v10.6 l-3.4,3.4 z" fill="#3f8fd2"/>
<path d="M422,61.4 h6 v6.8 h-4.4 z" fill="#5ba7e2"/>
<path d="M444,58.800000000000004 h15.600000000000001 v6.999999999999999 h-15.600000000000001 z" fill="#5ba7e2"/><path d="M444,58.800000000000004 l4.2,-4.2 h15.600000000000001 l-4.2,4.2 z" fill="#86c2f0"/><path d="M459.6,58.800000000000004 l4.2,-4.2 v6.999999999999999 l-4.2,4.2 z" fill="#3f8fd2"/>
<path d="M443.2,66.4 h16 l5,-4.6" fill="none" stroke="#8cc4ee" stroke-width="0.9"/>
<path d="M444,68 h15.6 v7.4 h-15.6 z" fill="#e9e9e9" stroke="#aaa" stroke-width="0.5"/><path d="M459.6,68 l4.2,-4 v7.4 l-4.2,4 z" fill="#bdbdbd"/>
<path d="M482,56.4 v17.6 M473.2,65.2 h17.6" stroke="#333" stroke-width="1.8" fill="none"/>
<path d="M482,54.200 l3.400,4.200 h-6.800 z M482,76.200 l3.400,-4.200 h-6.800 z M471,65.2 l4.200,-3.400 v6.800 z M493,65.2 l-4.200,-3.400 v6.800 z" fill="#333"/>
<path d="M507,67.60000000000001 h8.8 v7.999999999999999 h-8.8 z" fill="#dcdcdc" stroke="#9c9c9c" stroke-width="0.5" stroke-linejoin="round"/><path d="M507,67.60000000000001 l2.2,-2.2 h8.8 l-2.2,2.2 z" fill="#ececec" stroke="#9c9c9c" stroke-width="0.5" stroke-linejoin="round"/><path d="M515.8,67.60000000000001 l2.2,-2.2 v7.999999999999999 l-2.2,2.2 z" fill="#bdbdbd" stroke="#9c9c9c" stroke-width="0.5" stroke-linejoin="round"/>
<path d="M516,67.60000000000001 h8.8 v7.999999999999999 h-8.8 z" fill="#dcdcdc" stroke="#9c9c9c" stroke-width="0.5" stroke-linejoin="round"/><path d="M516,67.60000000000001 l2.2,-2.2 h8.8 l-2.2,2.2 z" fill="#ececec" stroke="#9c9c9c" stroke-width="0.5" stroke-linejoin="round"/><path d="M524.8,67.60000000000001 l2.2,-2.2 v7.999999999999999 l-2.2,2.2 z" fill="#bdbdbd" stroke="#9c9c9c" stroke-width="0.5" stroke-linejoin="round"/>
<path d="M507,59.6 h8.8 v7.8 h-8.8 z" fill="#5ba7e2"/><path d="M507,59.6 l2.2,-2.2 h8.8 l-2.2,2.2 z" fill="#86c2f0"/><path d="M515.8,59.6 l2.2,-2.2 v7.8 l-2.2,2.2 z" fill="#3f8fd2"/>
<polygon points="522.80,54.80 523.79,58.00 526.76,56.44 525.20,59.41 528.40,60.40 525.20,61.39 526.76,64.36 523.79,62.80 522.80,66.00 521.81,62.80 518.84,64.36 520.40,61.39 517.20,60.40 520.40,59.41 518.84,56.44 521.81,58.00" fill="#f2f2f2"/>
<polygon points="522.80,55.40 523.72,58.18 526.34,56.86 525.02,59.48 527.80,60.40 525.02,61.32 526.34,63.94 523.72,62.62 522.80,65.40 521.88,62.62 519.26,63.94 520.58,61.32 517.80,60.40 520.58,59.48 519.26,56.86 521.88,58.18" fill="#f6a70a"/>
<path d="M537.2,62.6 q2,-5.4 5.4,-6.2 l2.2,0.6 v11.4 l-5.6,6.2 l-2,-0.8 z" fill="#c8c8c8" stroke="#8e8e8e" stroke-width="0.7" stroke-linejoin="round"/>
<path d="M547.8,62 l3.8,-4.6 q3.6,1.6 4.6,6 v9.8 l-2,0.8 q-2.6,-4.6 -6.4,-4.2 z" fill="#c8c8c8" stroke="#8e8e8e" stroke-width="0.7" stroke-linejoin="round"/>
<path d="M543,63 l2,1 v3 l-2,-0.6z M549.2,63.6 l1.6,-1.2 v3 l-1.6,0.6z" fill="#5ba7e2"/>
<rect x="564.6" y="54.8" width="4.4" height="4.4" fill="#5ba7e2" stroke="#3f8fd2" stroke-width="0.5"/><rect x="567.6" y="58.2" width="4.4" height="4.4" fill="#e8eef4" stroke="#7aa4c8" stroke-width="0.5"/>
<path d="M568.6,62.6 v12.4 h4.4 M568.6,66 h4.4 M568.6,70.4 h4.4 M571.8,62.6 v12.4" fill="none" stroke="#9a9a9a" stroke-width="0.7"/>
<rect x="574.6" y="60.2" width="11" height="15.2" fill="#f6f6f6" stroke="#6e6e6e" stroke-width="0.7"/><rect x="574.6" y="60.2" width="11" height="2.2" fill="#5e5e5e"/><path d="M574.600,65.600 h11 M574.600,68.800 h11 M574.600,72 h11 M578.400,62.400 v13" stroke="#8a8a8a" stroke-width="0.6" fill="none"/>
<path d="M604,58.6 l3.6,-3.2 h14.4 v18 h-18 z" fill="#e6e6e6"/><path d="M613,68.6 h8 M613,72.6 h8" stroke="#b9c4cf" stroke-width="1"/><path d="M617,68.6 h2.4 M615.6,72.6 h2.4" stroke="#8fa6bc" stroke-width="1.6"/>
<circle cx="620.6" cy="59.8" r="5.6" fill="#1478d4"/><path d="M620.6,56.2 l2.6,3 h-1.6 v3.8 h-2 v-3.8 h-1.6 z" fill="#fff"/>
<rect x="633.4" y="55.2" width="17.6" height="16.4" fill="#ececec" stroke="#b4b4b4" stroke-width="0.6"/><rect x="633.4" y="55.2" width="17.6" height="2.6" fill="#c4c4c4"/><path d="M633.4,61.4 h17.6 M633.4,64.8 h17.6 M633.4,68.2 h17.6 M637.8,57.8 v13.8 M642.2,57.8 v13.8 M646.6,57.8 v13.8" stroke="#c2c2c2" stroke-width="0.6" fill="none"/>
<path d="M645,68.8 h9 M645,72.8 h9" stroke="#c8b4b4" stroke-width="1"/><path d="M648,68.8 h2.4 M650.6,72.8 h2.4" stroke="#9aa6bc" stroke-width="1.6"/>
<circle cx="649.2" cy="59.8" r="5.6" fill="#1478d4"/><path d="M649.2,56.2 l2.6,3 h-1.6 v3.8 h-2 v-3.8 h-1.6 z" fill="#fff"/>
<path d="M692,60.6 l4.4,-5 h2 v14 l-4.4,5 h-2 z" fill="#e4e4e4" stroke="#8e8e8e" stroke-width="0.8" stroke-linejoin="round"/>
<path d="M697.4,60.2 l5,-4.8 v14 l-5,4.8 z" fill="#4fb86a"/><path d="M697.4,60.2 l5,-4.8 v14 l-5,4.8 z" fill="none" stroke="#6cc884" stroke-width="0.4"/>
<path d="M705.6,60.6 l6.4,-5.2 v13 l-6.4,5.6 z" fill="#ee9a62"/>
<path d="M749.4,58.4 l4.6,-2.6 l4.8,2.6 v5.4 l-4.8,2.8 l-4.6,-2.8 z" fill="#f49a5c"/>
<path d="M764.4,57 l5.2,12 l-9.4,2.6 l-1.4,-6 z" fill="#3f8fd2"/><path d="M764.4,57 l-2.6,14 l-3,-5.4z" fill="#5ba7e2"/>
<circle cx="756.2" cy="69.6" r="5" fill="#a272e2"/><circle cx="755" cy="68.4" r="2.6" fill="#b68cf0" opacity="0.8"/>
<rect x="777.8" y="66.8" width="19.6" height="4.2" fill="#f2a81c"/><rect x="777.8" y="69.6" width="19.6" height="1.4" fill="#d98e0c"/>
<path d="M778.4,59.6 v5 M796.8,59.6 v5 M779.4,62.2 h16.4" stroke="#666" stroke-width="0.7" fill="none"/><path d="M779,62.2 l2.4,-1.2 v2.4z M796.2,62.2 l-2.4,-1.2 v2.4z" fill="#555"/>
<path d="M817.4,61.4 h14.0 v13.8 h-14.0 z" fill="#e9e9e9" stroke="#a4a4a4" stroke-width="0.5" stroke-linejoin="round"/><path d="M817.4,61.4 l3.8,-3.8 h14.0 l-3.8,3.8 z" fill="#f6f6f6" stroke="#a4a4a4" stroke-width="0.5" stroke-linejoin="round"/><path d="M831.4,61.4 l3.8,-3.8 v13.8 l-3.8,3.8 z" fill="#c4c4c4" stroke="#a4a4a4" stroke-width="0.5" stroke-linejoin="round"/>
<path d="M814.200,59.200 h7" stroke="#1a84dc" stroke-width="2.400"/><path d="M820.200,55.400 l5.200,3.800 l-5.200,3.800 z" fill="#1a84dc"/>
<g fill="none" stroke="#333" stroke-width="1.3"><rect x="826" y="70.6" width="5.6" height="3.6" rx="1.8" transform="rotate(-40 828.8 72.4)"/><rect x="829.6" y="67.8" width="5.6" height="3.6" rx="1.8" transform="rotate(-40 832.4 69.6)"/></g>
<path d="M845,56.6 q0,-1 1,-1 h14 q1,0 1,1 v3.6 q0,1 -1,1 h-4 v13 q0,0.8 -0.8,0.8 h-5 q-0.8,0 -0.8,-0.8 v-13 h-3.4 q-1,0 -1,-1 z" fill="#4b9add"/><path d="M845,56.6 q0,-1 1,-1 h14 q1,0 1,1 v1 h-16 z" fill="#7dbcf0"/><path d="M849.4,61.2 h2.2 v13.8 h-1.4 q-0.8,0 -0.8,-0.8 z" fill="#7dbcf0"/>
<path d="M855.0,70.3 h3.3 v-3.3 h2.6 v3.3 h3.3 v2.6 h-3.3 v3.3 h-2.6 v-3.3 h-3.3 z" fill="#2fae45"/>
<rect x="872.4" y="55" width="19.8" height="20.2" rx="1" fill="#3d8ed2"/><rect x="873.4" y="56" width="17.8" height="18.2" fill="#68b6ee"/><path d="M873.4,74.200 v-6.400 l4.600,-4.600 l4.400,4.600 l2.400,-2.200 l6.400,5.400 v3.200 z" fill="#3d8ed2"/><circle cx="886.8" cy="60" r="1.900" fill="#fff"/>
<rect x="929.2" y="52.6" width="25.8" height="25.4" fill="#0f97da"/>
<rect x="931.2" y="54.600" width="18.600" height="14.800" fill="none" stroke="#56c4f0" stroke-width="0.8" stroke-dasharray="2 1.400"/>
<path d="M945.2,64.6 v9.8 l2.2,-2 l1.6,3.6 l1.6,-0.7 l-1.6,-3.5 h3 z" fill="#fff"/>
<rect x="3" y="96" width="199" height="15.5" fill="#eeeeee" stroke="#d9d9d9" stroke-width="1"/>
<path d="M9.4,102.4 l-3,2 l3,2 z M12.8,102.4 l-3,2 l3,2 z" fill="#444"/>
<text x="19.5" y="106.6" font-size="7.4" fill="#555" font-weight="normal" text-anchor="start" textLength="46.5" lengthAdjust="spacingAndGlyphs" >NAVIGATEUR</text>
<circle cx="191.6" cy="104.3" r="2.9" fill="#333"/><rect x="190" y="103.9" width="3.2" height="0.8" fill="#eee"/>
<rect x="27" y="116.6" width="133" height="11.6" fill="#ececec"/>
<path d="M15.8,120 l3.4,2.5 l-3.4,2.5 z" fill="#fff" stroke="#555" stroke-width="0.7" stroke-linejoin="round"/>
<rect x="27.6" y="116.8" width="1.6" height="11.2" fill="#f0a4a4"/>
<path d="M32.200,122.400 q5,-5 10,0 q-5,5 -10,0 z" fill="#8e8e8e"/><circle cx="37.2" cy="122.4" r="2.100" fill="#ececec"/><circle cx="37.2" cy="122.4" r="1.100" fill="#7a7a7a"/>
<rect x="46.8" y="117.2" width="96.8" height="10.4" fill="#8b8b8b"/>
<path d="M50.4,119 h3.2 v7 h-3.2 z M54.2,122.2 h3.2 v3.8 h-3.2 z" fill="#e6e6e6"/><path d="M50.4,119 h3.2 v7 h-3.2 z" fill="none" stroke="#f8f8f8" stroke-width="0.5"/>
<text x="68.8" y="125" font-size="7.4" fill="#fff" font-weight="bold" text-anchor="start" textLength="68.2" lengthAdjust="spacingAndGlyphs" >boucles inox v14 v1</text>
<circle cx="151.3" cy="122.3" r="3.7" fill="#fafafa" stroke="#555" stroke-width="0.9"/><circle cx="151.3" cy="122.3" r="1.7" fill="#444"/>
<rect x="3" y="491" width="199" height="16" fill="#eeeeee" stroke="#d9d9d9" stroke-width="1"/>
<text x="19.2" y="502" font-size="7.4" fill="#555" font-weight="normal" text-anchor="start" textLength="59.3" lengthAdjust="spacingAndGlyphs" >COMMENTAIRES</text>
<circle cx="191.5" cy="499" r="2.9" fill="#333"/><path d="M189.9,499 h3.2 M191.5,497.4 v3.2" stroke="#eee" stroke-width="0.8"/>
<rect x="976.4" y="113.2" width="27.8" height="28" rx="1.2" fill="#ececec" stroke="#c2c2c2" stroke-width="1"/>
<rect x="978" y="141.4" width="27" height="1.2" fill="#dcdcdc"/>
<text x="981.8" y="130.2" font-size="6.4" fill="#979797" font-weight="bold" text-anchor="start" textLength="16.4" lengthAdjust="spacingAndGlyphs" >HAUT</text>
<text x="976.8" y="111.6" font-size="6.2" fill="#7ed67e" font-weight="normal" text-anchor="start" >Y</text>
<text x="1006.2" y="141.4" font-size="6.2" fill="#f28a8a" font-weight="normal" text-anchor="start" >X</text>
<text x="972.6" y="145" font-size="6.2" fill="#7a7af0" font-weight="normal" text-anchor="start" >Z</text>
<path d="M976.4,141.4 V112 M976.4,141.4 H1006" stroke="#c8c8c8" stroke-width="0.5" fill="none"/>
<rect x="432.6" y="490.6" width="157.4" height="15.6" fill="#f4f8fb" opacity="0.85"/>
<path d="M440.8,493.2 l4.8,3 v4.2 l-4.8,3 l-4.8,-3 v-4.2 z" fill="#fafafa" stroke="#777" stroke-width="0.7"/><ellipse cx="440.8" cy="498.4" rx="5.4" ry="2.2" fill="none" stroke="#777" stroke-width="0.6"/><circle cx="440.8" cy="498.4" r="0.9" fill="#777"/>
<path d="M450.1,497.45 h3 l-1.5,1.9 z" fill="#333"/>
<rect x="458.4" y="495.2" width="9.2" height="7.6" fill="#e8e8e8" stroke="#777" stroke-width="0.9"/><rect x="458.4" y="495.2" width="9.2" height="2" fill="#777"/><path d="M460,494.2 v1.4 M466,494.2 v1.4 M460.4,500 h5.4" stroke="#777" stroke-width="0.9"/>
<path d="M477.4,499.8 l-1.6,-2 q-0.6,-1 0.4,-1.3 q0.8,-0.1 1.4,0.8 l0.6,0.8 v-3.6 q0.1,-0.8 0.8,-0.8 q0.7,0 0.8,0.8 v-1 q0.1,-0.8 0.8,-0.8 q0.7,0 0.8,0.8 v0.8 q0.1,-0.7 0.8,-0.7 q0.7,0 0.8,0.8 v1.2 q0.1,-0.6 0.7,-0.6 q0.7,0 0.8,0.8 v3.4 q0,2.4 -1.4,3.8 h-4.6 q-1.2,-1 -1.9,-2.4 z" fill="#fafafa" stroke="#666" stroke-width="0.7" stroke-linejoin="round"/>
<circle cx="495.8" cy="497" r="3.3" fill="#f8f8f8" stroke="#777" stroke-width="0.9"/><path d="M498.2,499.4 l3.2,3.4" stroke="#555" stroke-width="1.5" stroke-linecap="round"/><path d="M500.6,493.4 v2 M499.6,494.4 h2" stroke="#777" stroke-width="0.6"/>
<rect x="510" y="494" width="6" height="5" fill="none" stroke="#aaa" stroke-width="0.5" stroke-dasharray="1 0.8"/><circle cx="513.2" cy="497" r="3.2" fill="none" stroke="#888" stroke-width="0.9"/><path d="M515.6,499.4 l3.2,3.4" stroke="#555" stroke-width="1.5" stroke-linecap="round"/>
<path d="M523.7,497.45 h3 l-1.5,1.9 z" fill="#333"/>
<rect x="532" y="493.6" width="9.8" height="7.6" fill="#7aa8dc" stroke="#6a88a8" stroke-width="0.7"/><path d="M535,501.4 h3.8 l1,2.2 h-5.8 z" fill="#9a9a9a"/>
<path d="M543.9,497.45 h3 l-1.5,1.9 z" fill="#333"/>
<rect x="552.6" y="493.6" width="9.8" height="9.8" fill="#bdbdbd" stroke="#8a8a8a" stroke-width="0.5"/><path d="M555.9,493.6 v9.8 M559.1,493.6 v9.8 M552.6,496.9 h9.8 M552.6,500.1 h9.8" stroke="#8a8a8a" stroke-width="0.6"/>
<path d="M564.5,497.45 h3 l-1.5,1.9 z" fill="#333"/>
<rect x="573" y="494" width="9.8" height="8.8" fill="#7aa8dc" stroke="#4a78b0" stroke-width="0.8"/><path d="M577.9,494 v8.8" stroke="#3a5f90" stroke-width="1"/>
<path d="M584.9,497.45 h3 l-1.5,1.9 z" fill="#333"/>
<rect x="0" y="511.4" width="1024" height="1" fill="#dedede"/>
<rect x="7" y="523.6" width="1.5" height="7.6" fill="#555"/><path d="M15,523.6 v7.6 l-6.2,-3.8 z" fill="#555"/>
<path d="M29.6,523.8 v7.2 l-5.6,-3.6 z" fill="#555"/><rect x="30.2" y="525.8" width="2.2" height="3.2" fill="#555"/>
<path d="M40.8,522.6 v9.6 l7.6,-4.8 z" fill="#555"/>
<path d="M59,523.8 v7.2 l5.6,-3.6 z" fill="#555"/><rect x="56.2" y="525.8" width="2.2" height="3.2" fill="#555"/>
<path d="M74,523.6 v7.6 l6.2,-3.8 z" fill="#555"/><rect x="79.9" y="523.6" width="1.5" height="7.6" fill="#555"/>
<rect x="96" y="516.2" width="13.2" height="3.3" fill="#f6a9a9"/>
<rect x="112" y="516.2" width="29.2" height="3.3" fill="#f7d26e"/>
<rect x="144" y="516.2" width="13.2" height="3.3" fill="#f6a9a9"/>
<rect x="160" y="516.2" width="29.2" height="3.3" fill="#6ad4cc"/>
<rect x="192" y="516.2" width="125.2" height="3.3" fill="#f6a9a9"/>
<rect x="320" y="516.2" width="29.2" height="3.3" fill="#b4e06c"/>
<rect x="352" y="516.2" width="29.2" height="3.3" fill="#f5975c"/>
<rect x="384" y="516.2" width="29.2" height="3.3" fill="#4a7fe0"/>
<rect x="416" y="516.2" width="29.2" height="3.3" fill="#ee536c"/>
<rect x="448" y="516.2" width="29.2" height="3.3" fill="#bb8ae6"/>
<rect x="480" y="516.2" width="29.2" height="3.3" fill="#e58ac4"/>
<rect x="512" y="516.2" width="29.2" height="3.3" fill="#f7ad5c"/>
<rect x="544" y="516.2" width="29.2" height="3.3" fill="#70e0c4"/>
<rect x="576" y="516.2" width="45.2" height="3.3" fill="#f6a9a9"/>
<rect x="624" y="516.2" width="29.2" height="3.3" fill="#f7d26e"/>
<rect x="656" y="516.2" width="29.2" height="3.3" fill="#f6a9a9"/>
<rect x="688" y="516.2" width="29.2" height="3.3" fill="#f7d26e"/>
<rect x="720" y="516.2" width="45.2" height="3.3" fill="#f6a9a9"/>
<rect x="102.5" y="538.2" width="660" height="4.600" fill="#f7f7f7"/><path d="M102.5,537.800 H758.5" stroke="#c6c6c6" stroke-width="0.9" fill="none"/>
<path d="M102.5,534.600 v3.200 M118.5,534.600 v3.200 M134.5,534.600 v3.200 M150.5,534.600 v3.200 M166.5,534.600 v3.200 M182.5,534.600 v3.200 M198.5,534.600 v3.200 M214.5,534.600 v3.200 M230.5,534.600 v3.200 M246.5,534.600 v3.200 M262.5,534.600 v3.200 M278.5,534.600 v3.200 M294.5,534.600 v3.200 M310.5,534.600 v3.200 M326.5,534.600 v3.200 M342.5,534.600 v3.200 M358.5,534.600 v3.200 M374.5,534.600 v3.200 M390.5,534.600 v3.200 M406.5,534.600 v3.200 M422.5,534.600 v3.200 M438.5,534.600 v3.200 M454.5,534.600 v3.200 M470.5,534.600 v3.200 M486.5,534.600 v3.200 M502.5,534.600 v3.200 M518.5,534.600 v3.200 M534.5,534.600 v3.200 M550.5,534.600 v3.200 M566.5,534.600 v3.200 M582.5,534.600 v3.200 M598.5,534.600 v3.200 M614.5,534.600 v3.200 M630.5,534.600 v3.200 M646.5,534.600 v3.200 M662.5,534.600 v3.200 M678.5,534.600 v3.200 M694.5,534.600 v3.200 M710.5,534.600 v3.200 M726.5,534.600 v3.200 M742.5,534.600 v3.200 M758.5,534.600 v3.200" stroke="#cdcdcd" stroke-width="0.8" fill="none"/>
<path d="M99.7,523.4 h4.6 l3,3 v4 q0,2 -2,2 h-5.6 q-2,0 -2,-2 v-5 q0,-2 2,-2 z" fill="#dadada" stroke="#7a7a7a" stroke-width="0.9" stroke-linejoin="round"/><polygon points="105.70,521.10 106.31,522.92 108.03,522.07 107.18,523.79 109.00,524.40 107.18,525.01 108.03,526.73 106.31,525.88 105.70,527.70 105.09,525.88 103.37,526.73 104.22,525.01 102.40,524.40 104.22,523.79 103.37,522.07 105.09,522.92" fill="#f7b02c"/>
<rect x="113.9" y="522.4" width="9.6" height="9.6" fill="#f6f8fa" stroke="#8ab0d0" stroke-width="0.5" stroke-dasharray="1.4 0.8"/><path d="M115.9,524.6 h5 v3 a3.6,3.6 0 0 1 -5,2.2 z" fill="#fff" stroke="#667" stroke-width="0.7"/><path d="M118.7,531.4 l4,-4.2 l1.4,1.4 l-4,4.2 l-1.8,0.4 z" fill="#f2a63a"/><path d="M122.7,527.2 l0.8,-0.8 l1.4,1.4 l-0.8,0.8 z" fill="#e05a5a"/>
<path d="M129.7,524.0 h7.8 v8.399999999999999 h-7.8 z" fill="#4d9be0"/><path d="M129.7,524.0 l2.2,-2.2 h7.8 l-2.2,2.2 z" fill="#8cc6f2"/><path d="M137.5,524.0 l2.2,-2.2 v8.399999999999999 l-2.2,2.2 z" fill="#2f7fc8"/>
<path d="M147.70000000000002,523.4 h4.6 l3,3 v4 q0,2 -2,2 h-5.6 q-2,0 -2,-2 v-5 q0,-2 2,-2 z" fill="#dadada" stroke="#7a7a7a" stroke-width="0.9" stroke-linejoin="round"/><polygon points="153.70,521.10 154.31,522.92 156.03,522.07 155.18,523.79 157.00,524.40 155.18,525.01 156.03,526.73 154.31,525.88 153.70,527.70 153.09,525.88 151.37,526.73 152.22,525.01 150.40,524.40 152.22,523.79 151.37,522.07 153.09,522.92" fill="#f7b02c"/>
<rect x="161.9" y="522.4" width="9.6" height="9.6" fill="#f6f8fa" stroke="#8ab0d0" stroke-width="0.5" stroke-dasharray="1.4 0.8"/><path d="M163.9,524.6 h5 v3 a3.6,3.6 0 0 1 -5,2.2 z" fill="#fff" stroke="#667" stroke-width="0.7"/><path d="M166.7,531.4 l4,-4.2 l1.4,1.4 l-4,4.2 l-1.8,0.4 z" fill="#f2a63a"/><path d="M170.7,527.2 l0.8,-0.8 l1.4,1.4 l-0.8,0.8 z" fill="#e05a5a"/>
<path d="M177.7,524.0 h7.8 v8.399999999999999 h-7.8 z" fill="#4d9be0"/><path d="M177.7,524.0 l2.2,-2.2 h7.8 l-2.2,2.2 z" fill="#8cc6f2"/><path d="M185.5,524.0 l2.2,-2.2 v8.399999999999999 l-2.2,2.2 z" fill="#2f7fc8"/>
<path d="M195.70000000000002,523.4 h4.6 l3,3 v4 q0,2 -2,2 h-5.6 q-2,0 -2,-2 v-5 q0,-2 2,-2 z" fill="#dadada" stroke="#7a7a7a" stroke-width="0.9" stroke-linejoin="round"/><polygon points="201.70,521.10 202.31,522.92 204.03,522.07 203.18,523.79 205.00,524.40 203.18,525.01 204.03,526.73 202.31,525.88 201.70,527.70 201.09,525.88 199.37,526.73 200.22,525.01 198.40,524.40 200.22,523.79 199.37,522.07 201.09,522.92" fill="#f7b02c"/>
<path d="M211.70000000000002,523.4 h4.6 l3,3 v4 q0,2 -2,2 h-5.6 q-2,0 -2,-2 v-5 q0,-2 2,-2 z" fill="#dadada" stroke="#7a7a7a" stroke-width="0.9" stroke-linejoin="round"/><polygon points="217.70,521.10 218.31,522.92 220.03,522.07 219.18,523.79 221.00,524.40 219.18,525.01 220.03,526.73 218.31,525.88 217.70,527.70 217.09,525.88 215.37,526.73 216.22,525.01 214.40,524.40 216.22,523.79 215.37,522.07 217.09,522.92" fill="#f7b02c"/>
<path d="M227.70000000000002,523.4 h4.6 l3,3 v4 q0,2 -2,2 h-5.6 q-2,0 -2,-2 v-5 q0,-2 2,-2 z" fill="#dadada" stroke="#7a7a7a" stroke-width="0.9" stroke-linejoin="round"/><polygon points="233.70,521.10 234.31,522.92 236.03,522.07 235.18,523.79 237.00,524.40 235.18,525.01 236.03,526.73 234.31,525.88 233.70,527.70 233.09,525.88 231.37,526.73 232.22,525.01 230.40,524.40 232.22,523.79 231.37,522.07 233.09,522.92" fill="#f7b02c"/>
<path d="M243.70000000000002,523.4 h4.6 l3,3 v4 q0,2 -2,2 h-5.6 q-2,0 -2,-2 v-5 q0,-2 2,-2 z" fill="#dadada" stroke="#7a7a7a" stroke-width="0.9" stroke-linejoin="round"/><polygon points="249.70,521.10 250.31,522.92 252.03,522.07 251.18,523.79 253.00,524.40 251.18,525.01 252.03,526.73 250.31,525.88 249.70,527.70 249.09,525.88 247.37,526.73 248.22,525.01 246.40,524.40 248.22,523.79 247.37,522.07 249.09,522.92" fill="#f7b02c"/>
<path d="M259.7,523.4 h4.6 l3,3 v4 q0,2 -2,2 h-5.6 q-2,0 -2,-2 v-5 q0,-2 2,-2 z" fill="#dadada" stroke="#7a7a7a" stroke-width="0.9" stroke-linejoin="round"/><polygon points="265.70,521.10 266.31,522.92 268.03,522.07 267.18,523.79 269.00,524.40 267.18,525.01 268.03,526.73 266.31,525.88 265.70,527.70 265.09,525.88 263.37,526.73 264.22,525.01 262.40,524.40 264.22,523.79 263.37,522.07 265.09,522.92" fill="#f7b02c"/>
<path d="M275.7,523.4 h4.6 l3,3 v4 q0,2 -2,2 h-5.6 q-2,0 -2,-2 v-5 q0,-2 2,-2 z" fill="#dadada" stroke="#7a7a7a" stroke-width="0.9" stroke-linejoin="round"/><polygon points="281.70,521.10 282.31,522.92 284.03,522.07 283.18,523.79 285.00,524.40 283.18,525.01 284.03,526.73 282.31,525.88 281.70,527.70 281.09,525.88 279.37,526.73 280.22,525.01 278.40,524.40 280.22,523.79 279.37,522.07 281.09,522.92" fill="#f7b02c"/>
<path d="M291.7,523.4 h4.6 l3,3 v4 q0,2 -2,2 h-5.6 q-2,0 -2,-2 v-5 q0,-2 2,-2 z" fill="#dadada" stroke="#7a7a7a" stroke-width="0.9" stroke-linejoin="round"/><polygon points="297.70,521.10 298.31,522.92 300.03,522.07 299.18,523.79 301.00,524.40 299.18,525.01 300.03,526.73 298.31,525.88 297.70,527.70 297.09,525.88 295.37,526.73 296.22,525.01 294.40,524.40 296.22,523.79 295.37,522.07 297.09,522.92" fill="#f7b02c"/>
<path d="M307.7,523.4 h4.6 l3,3 v4 q0,2 -2,2 h-5.6 q-2,0 -2,-2 v-5 q0,-2 2,-2 z" fill="#dadada" stroke="#7a7a7a" stroke-width="0.9" stroke-linejoin="round"/><polygon points="313.70,521.10 314.31,522.92 316.03,522.07 315.18,523.79 317.00,524.40 315.18,525.01 316.03,526.73 314.31,525.88 313.70,527.70 313.09,525.88 311.37,526.73 312.22,525.01 310.40,524.40 312.22,523.79 311.37,522.07 313.09,522.92" fill="#f7b02c"/>
<rect x="321.9" y="522.4" width="9.6" height="9.6" fill="#f6f8fa" stroke="#8ab0d0" stroke-width="0.5" stroke-dasharray="1.4 0.8"/><path d="M323.9,524.6 h5 v3 a3.6,3.6 0 0 1 -5,2.2 z" fill="#fff" stroke="#667" stroke-width="0.7"/><path d="M326.7,531.4 l4,-4.2 l1.4,1.4 l-4,4.2 l-1.8,0.4 z" fill="#f2a63a"/><path d="M330.7,527.2 l0.8,-0.8 l1.4,1.4 l-0.8,0.8 z" fill="#e05a5a"/>
<path d="M337.7,524.0 h7.8 v8.399999999999999 h-7.8 z" fill="#4d9be0"/><path d="M337.7,524.0 l2.2,-2.2 h7.8 l-2.2,2.2 z" fill="#8cc6f2"/><path d="M345.5,524.0 l2.2,-2.2 v8.399999999999999 l-2.2,2.2 z" fill="#2f7fc8"/>
<rect x="353.9" y="522.4" width="9.6" height="9.6" fill="#f6f8fa" stroke="#8ab0d0" stroke-width="0.5" stroke-dasharray="1.4 0.8"/><path d="M355.9,524.6 h5 v3 a3.6,3.6 0 0 1 -5,2.2 z" fill="#fff" stroke="#667" stroke-width="0.7"/><path d="M358.7,531.4 l4,-4.2 l1.4,1.4 l-4,4.2 l-1.8,0.4 z" fill="#f2a63a"/><path d="M362.7,527.2 l0.8,-0.8 l1.4,1.4 l-0.8,0.8 z" fill="#e05a5a"/>
<path d="M369.7,524.0 h7.8 v8.399999999999999 h-7.8 z" fill="#4d9be0"/><path d="M369.7,524.0 l2.2,-2.2 h7.8 l-2.2,2.2 z" fill="#8cc6f2"/><path d="M377.5,524.0 l2.2,-2.2 v8.399999999999999 l-2.2,2.2 z" fill="#2f7fc8"/>
<rect x="385.9" y="522.4" width="9.6" height="9.6" fill="#f6f8fa" stroke="#8ab0d0" stroke-width="0.5" stroke-dasharray="1.4 0.8"/><path d="M387.9,524.6 h5 v3 a3.6,3.6 0 0 1 -5,2.2 z" fill="#fff" stroke="#667" stroke-width="0.7"/><path d="M390.7,531.4 l4,-4.2 l1.4,1.4 l-4,4.2 l-1.8,0.4 z" fill="#f2a63a"/><path d="M394.7,527.2 l0.8,-0.8 l1.4,1.4 l-0.8,0.8 z" fill="#e05a5a"/>
<path d="M401.7,524.0 h7.8 v8.399999999999999 h-7.8 z" fill="#4d9be0"/><path d="M401.7,524.0 l2.2,-2.2 h7.8 l-2.2,2.2 z" fill="#8cc6f2"/><path d="M409.5,524.0 l2.2,-2.2 v8.399999999999999 l-2.2,2.2 z" fill="#2f7fc8"/>
<rect x="417.9" y="522.4" width="9.6" height="9.6" fill="#f6f8fa" stroke="#8ab0d0" stroke-width="0.5" stroke-dasharray="1.4 0.8"/><path d="M419.9,524.6 h5 v3 a3.6,3.6 0 0 1 -5,2.2 z" fill="#fff" stroke="#667" stroke-width="0.7"/><path d="M422.7,531.4 l4,-4.2 l1.4,1.4 l-4,4.2 l-1.8,0.4 z" fill="#f2a63a"/><path d="M426.7,527.2 l0.8,-0.8 l1.4,1.4 l-0.8,0.8 z" fill="#e05a5a"/>
<path d="M433.7,524.0 h7.8 v8.399999999999999 h-7.8 z" fill="#4d9be0"/><path d="M433.7,524.0 l2.2,-2.2 h7.8 l-2.2,2.2 z" fill="#8cc6f2"/><path d="M441.5,524.0 l2.2,-2.2 v8.399999999999999 l-2.2,2.2 z" fill="#2f7fc8"/>
<rect x="449.9" y="522.4" width="9.6" height="9.6" fill="#f6f8fa" stroke="#8ab0d0" stroke-width="0.5" stroke-dasharray="1.4 0.8"/><path d="M451.9,524.6 h5 v3 a3.6,3.6 0 0 1 -5,2.2 z" fill="#fff" stroke="#667" stroke-width="0.7"/><path d="M454.7,531.4 l4,-4.2 l1.4,1.4 l-4,4.2 l-1.8,0.4 z" fill="#f2a63a"/><path d="M458.7,527.2 l0.8,-0.8 l1.4,1.4 l-0.8,0.8 z" fill="#e05a5a"/>
<path d="M465.7,524.0 h7.8 v8.399999999999999 h-7.8 z" fill="#4d9be0"/><path d="M465.7,524.0 l2.2,-2.2 h7.8 l-2.2,2.2 z" fill="#8cc6f2"/><path d="M473.5,524.0 l2.2,-2.2 v8.399999999999999 l-2.2,2.2 z" fill="#2f7fc8"/>
<rect x="481.9" y="522.4" width="9.6" height="9.6" fill="#f6f8fa" stroke="#8ab0d0" stroke-width="0.5" stroke-dasharray="1.4 0.8"/><path d="M483.9,524.6 h5 v3 a3.6,3.6 0 0 1 -5,2.2 z" fill="#fff" stroke="#667" stroke-width="0.7"/><path d="M486.7,531.4 l4,-4.2 l1.4,1.4 l-4,4.2 l-1.8,0.4 z" fill="#f2a63a"/><path d="M490.7,527.2 l0.8,-0.8 l1.4,1.4 l-0.8,0.8 z" fill="#e05a5a"/>
<path d="M497.7,524.0 h7.8 v8.399999999999999 h-7.8 z" fill="#4d9be0"/><path d="M497.7,524.0 l2.2,-2.2 h7.8 l-2.2,2.2 z" fill="#8cc6f2"/><path d="M505.5,524.0 l2.2,-2.2 v8.399999999999999 l-2.2,2.2 z" fill="#2f7fc8"/>
<rect x="513.9" y="522.4" width="9.6" height="9.6" fill="#f6f8fa" stroke="#8ab0d0" stroke-width="0.5" stroke-dasharray="1.4 0.8"/><path d="M515.9,524.6 h5 v3 a3.6,3.6 0 0 1 -5,2.2 z" fill="#fff" stroke="#667" stroke-width="0.7"/><path d="M518.7,531.4 l4,-4.2 l1.4,1.4 l-4,4.2 l-1.8,0.4 z" fill="#f2a63a"/><path d="M522.7,527.2 l0.8,-0.8 l1.4,1.4 l-0.8,0.8 z" fill="#e05a5a"/>
<path d="M529.7,524.0 h7.8 v8.399999999999999 h-7.8 z" fill="#4d9be0"/><path d="M529.7,524.0 l2.2,-2.2 h7.8 l-2.2,2.2 z" fill="#8cc6f2"/><path d="M537.5,524.0 l2.2,-2.2 v8.399999999999999 l-2.2,2.2 z" fill="#2f7fc8"/>
<rect x="545.9" y="522.4" width="9.6" height="9.6" fill="#f6f8fa" stroke="#8ab0d0" stroke-width="0.5" stroke-dasharray="1.4 0.8"/><path d="M547.9,524.6 h5 v3 a3.6,3.6 0 0 1 -5,2.2 z" fill="#fff" stroke="#667" stroke-width="0.7"/><path d="M550.7,531.4 l4,-4.2 l1.4,1.4 l-4,4.2 l-1.8,0.4 z" fill="#f2a63a"/><path d="M554.7,527.2 l0.8,-0.8 l1.4,1.4 l-0.8,0.8 z" fill="#e05a5a"/>
<path d="M561.7,524.0 h7.8 v8.399999999999999 h-7.8 z" fill="#4d9be0"/><path d="M561.7,524.0 l2.2,-2.2 h7.8 l-2.2,2.2 z" fill="#8cc6f2"/><path d="M569.5,524.0 l2.2,-2.2 v8.399999999999999 l-2.2,2.2 z" fill="#2f7fc8"/>
<path d="M579.6999999999999,523.4 h4.6 l3,3 v4 q0,2 -2,2 h-5.6 q-2,0 -2,-2 v-5 q0,-2 2,-2 z" fill="#dadada" stroke="#7a7a7a" stroke-width="0.9" stroke-linejoin="round"/><polygon points="585.70,521.10 586.31,522.92 588.03,522.07 587.18,523.79 589.00,524.40 587.18,525.01 588.03,526.73 586.31,525.88 585.70,527.70 585.09,525.88 583.37,526.73 584.22,525.01 582.40,524.40 584.22,523.79 583.37,522.07 585.09,522.92" fill="#f7b02c"/>
<rect x="593.9" y="522.4" width="9.6" height="9.6" fill="#f6f8fa" stroke="#8ab0d0" stroke-width="0.5" stroke-dasharray="1.4 0.8"/><path d="M595.9,524.6 h5 v3 a3.6,3.6 0 0 1 -5,2.2 z" fill="#fff" stroke="#667" stroke-width="0.7"/><path d="M598.7,531.4 l4,-4.2 l1.4,1.4 l-4,4.2 l-1.8,0.4 z" fill="#f2a63a"/><path d="M602.7,527.2 l0.8,-0.8 l1.4,1.4 l-0.8,0.8 z" fill="#e05a5a"/>
<path d="M611.6999999999999,523.4 h4.6 l3,3 v4 q0,2 -2,2 h-5.6 q-2,0 -2,-2 v-5 q0,-2 2,-2 z" fill="#dadada" stroke="#7a7a7a" stroke-width="0.9" stroke-linejoin="round"/><polygon points="617.70,521.10 618.31,522.92 620.03,522.07 619.18,523.79 621.00,524.40 619.18,525.01 620.03,526.73 618.31,525.88 617.70,527.70 617.09,525.88 615.37,526.73 616.22,525.01 614.40,524.40 616.22,523.79 615.37,522.07 617.09,522.92" fill="#f7b02c"/>
<rect x="625.9" y="522.4" width="9.6" height="9.6" fill="#f6f8fa" stroke="#8ab0d0" stroke-width="0.5" stroke-dasharray="1.4 0.8"/><path d="M627.9,524.6 h5 v3 a3.6,3.6 0 0 1 -5,2.2 z" fill="#fff" stroke="#667" stroke-width="0.7"/><path d="M630.7,531.4 l4,-4.2 l1.4,1.4 l-4,4.2 l-1.8,0.4 z" fill="#f2a63a"/><path d="M634.7,527.2 l0.8,-0.8 l1.4,1.4 l-0.8,0.8 z" fill="#e05a5a"/>
<path d="M641.7,524.0 h7.8 v8.399999999999999 h-7.8 z" fill="#4d9be0"/><path d="M641.7,524.0 l2.2,-2.2 h7.8 l-2.2,2.2 z" fill="#8cc6f2"/><path d="M649.5,524.0 l2.2,-2.2 v8.399999999999999 l-2.2,2.2 z" fill="#2f7fc8"/>
<path d="M657.7,524.0 h7.8 v8.399999999999999 h-7.8 z" fill="#4d9be0"/><path d="M657.7,524.0 l2.2,-2.2 h7.8 l-2.2,2.2 z" fill="#8cc6f2"/><path d="M665.5,524.0 l2.2,-2.2 v8.399999999999999 l-2.2,2.2 z" fill="#2f7fc8"/>
<path d="M675.6999999999999,523.4 h4.6 l3,3 v4 q0,2 -2,2 h-5.6 q-2,0 -2,-2 v-5 q0,-2 2,-2 z" fill="#dadada" stroke="#7a7a7a" stroke-width="0.9" stroke-linejoin="round"/><polygon points="681.70,521.10 682.31,522.92 684.03,522.07 683.18,523.79 685.00,524.40 683.18,525.01 684.03,526.73 682.31,525.88 681.70,527.70 681.09,525.88 679.37,526.73 680.22,525.01 678.40,524.40 680.22,523.79 679.37,522.07 681.09,522.92" fill="#f7b02c"/>
<rect x="689.9" y="522.4" width="9.6" height="9.6" fill="#f6f8fa" stroke="#8ab0d0" stroke-width="0.5" stroke-dasharray="1.4 0.8"/><path d="M691.9,524.6 h5 v3 a3.6,3.6 0 0 1 -5,2.2 z" fill="#fff" stroke="#667" stroke-width="0.7"/><path d="M694.7,531.4 l4,-4.2 l1.4,1.4 l-4,4.2 l-1.8,0.4 z" fill="#f2a63a"/><path d="M698.7,527.2 l0.8,-0.8 l1.4,1.4 l-0.8,0.8 z" fill="#e05a5a"/>
<path d="M705.7,524.0 h7.8 v8.399999999999999 h-7.8 z" fill="#4d9be0"/><path d="M705.7,524.0 l2.2,-2.2 h7.8 l-2.2,2.2 z" fill="#8cc6f2"/><path d="M713.5,524.0 l2.2,-2.2 v8.399999999999999 l-2.2,2.2 z" fill="#2f7fc8"/>
<path d="M722.1,525 l2.6,-2.6 v8 l-2.6,2.6 z" fill="#e4e4e4" stroke="#8e8e8e" stroke-width="0.6"/><path d="M725.1,525 l2.6,-2.6 v8 l-2.6,2.6 z" fill="#4fb86a"/><path d="M728.5,525.2 l3,-2.6 v7.4 l-3,3 z" fill="#ee9a62"/>
<rect x="737.9" y="522.4" width="9.6" height="9.6" fill="#f6f8fa" stroke="#8ab0d0" stroke-width="0.5" stroke-dasharray="1.4 0.8"/><path d="M739.9,524.6 h5 v3 a3.6,3.6 0 0 1 -5,2.2 z" fill="#fff" stroke="#667" stroke-width="0.7"/><path d="M742.7,531.4 l4,-4.2 l1.4,1.4 l-4,4.2 l-1.8,0.4 z" fill="#f2a63a"/><path d="M746.7,527.2 l0.8,-0.8 l1.4,1.4 l-0.8,0.8 z" fill="#e05a5a"/>
<path d="M753.7,524.0 h7.8 v8.399999999999999 h-7.8 z" fill="#4d9be0"/><path d="M753.7,524.0 l2.2,-2.2 h7.8 l-2.2,2.2 z" fill="#8cc6f2"/><path d="M761.5,524.0 l2.2,-2.2 v8.399999999999999 l-2.2,2.2 z" fill="#2f7fc8"/>
<path d="M762.700,516.800 h8 v1.600 l-3.100,3 v17 h-1.800 v-17 l-3.100,-3 z" fill="#505050"/>
<polygon points="1014.46,526.41 1014.46,527.59 1013.07,527.97 1012.74,528.77 1013.45,530.03 1012.63,530.85 1011.37,530.14 1010.57,530.47 1010.19,531.86 1009.01,531.86 1008.63,530.47 1007.83,530.14 1006.57,530.85 1005.75,530.03 1006.46,528.77 1006.13,527.97 1004.74,527.59 1004.74,526.41 1006.13,526.03 1006.46,525.23 1005.75,523.97 1006.57,523.15 1007.83,523.86 1008.63,523.53 1009.01,522.14 1010.19,522.14 1010.57,523.53 1011.37,523.86 1012.63,523.15 1013.45,523.97 1012.74,525.23 1013.07,526.03" fill="#777"/><circle cx="1009.6" cy="527" r="1.7" fill="#f2f2f2"/>
<path d="M17.4,567 a3.4,3.4 0 0 1 0.4,-6.8 a5,5 0 0 1 9,-1 a4,4 0 0 1 0.6,7.8 z" fill="#c9d9f6"/><path d="M17.4,567 a3.4,3.4 0 0 1 -1,-6 q2,4 8,4.4 q3,0 5.6,-1 a4,4 0 0 1 -2.6,2.6 z" fill="#a9c0ee"/>
<circle cx="28" cy="559.2" r="1.6" fill="#d8862a"/><rect x="21.4" y="550" width="12.4" height="8" rx="1.5" fill="#1f1f1f"/>
<text x="22.6" y="556.8" font-size="7.2" fill="#fff" font-weight="bold" text-anchor="start" textLength="10.2" lengthAdjust="spacingAndGlyphs" >15°</text>
<rect x="91.2" y="552.4" width="7.4" height="7.4" rx="0.6" fill="#4cc4f6"/>
<rect x="99.3" y="552.4" width="7.4" height="7.4" rx="0.6" fill="#3ab6f2"/>
<rect x="91.2" y="560.5" width="7.4" height="7.4" rx="0.6" fill="#26a2ec"/>
<rect x="99.3" y="560.5" width="7.4" height="7.4" rx="0.6" fill="#1a90e4"/>
<circle cx="128.2" cy="559" r="5.2" fill="none" stroke="#f2f2f2" stroke-width="1.5"/><path d="M132,563 l3.6,3.8" stroke="#f2f2f2" stroke-width="1.7" stroke-linecap="round"/>
<rect x="150.4" y="557" width="10.6" height="10" rx="1" fill="#7c7c7c"/><rect x="155.6" y="552.6" width="10.6" height="10" rx="1" fill="#f4f4f4"/><rect x="155.6" y="557" width="5.4" height="5.6" fill="#c8c8c8"/>
<rect x="242" y="552.2" width="12.4" height="15" rx="1.2" fill="#2b7cd3"/><rect x="242" y="552.2" width="12.4" height="3.8" fill="#41a5ee"/><rect x="242" y="559.6" width="12.4" height="3.8" fill="#185abd"/><rect x="242" y="563.4" width="12.4" height="3.8" fill="#103f91"/>
<rect x="238" y="555.4" width="8.6" height="8.6" rx="1" fill="#185abd"/>
<text x="242.3" y="562.4" font-size="6.2" fill="#fff" font-weight="bold" text-anchor="middle" >W</text>
<rect x="244.4" y="570.8" width="4" height="1.4" rx="0.7" fill="#9a9a9a"/>
<path d="M356,554 q0,-1.2 1.2,-1.2 h4.2 l1.8,1.8 h8 q1.2,0 1.2,1.2 v10.8 q0,1.2 -1.2,1.2 h-14 q-1.2,0 -1.2,-1.2 z" fill="#e9a820"/><rect x="356" y="556" width="16.4" height="11.8" rx="1.2" fill="#f8cf3c"/><path d="M360,567.8 v-3.4 q0,-1 1,-1 h6.4 q1,0 1,1 v3.4 z" fill="#2a7ad2"/>
<rect x="387" y="552" width="12.6" height="16" rx="1.2" fill="#8d99a8"/><rect x="388.4" y="553.4" width="9.8" height="3.4" fill="#4cb4ea"/>
<rect x="388.4" y="558.0" width="2.6" height="2.4" fill="#f4f4f4"/>
<rect x="388.4" y="561.2" width="2.6" height="2.4" fill="#f4f4f4"/>
<rect x="388.4" y="564.4" width="2.6" height="2.4" fill="#f4f4f4"/>
<rect x="391.8" y="558.0" width="2.6" height="2.4" fill="#f4f4f4"/>
<rect x="391.8" y="561.2" width="2.6" height="2.4" fill="#f4f4f4"/>
<rect x="391.8" y="564.4" width="2.6" height="2.4" fill="#f4f4f4"/>
<rect x="395.2" y="558.0" width="2.6" height="2.4" fill="#f4f4f4"/>
<rect x="395.2" y="561.2" width="2.6" height="2.4" fill="#1a64b8"/>
<rect x="395.2" y="564.4" width="2.6" height="2.4" fill="#1a64b8"/>
<rect x="438" y="547" width="27.2" height="26.4" rx="3" fill="#2e2e2e"/>
<rect x="444" y="552" width="15" height="15.8" rx="2" fill="#f47b20"/><path d="M444,563.4 h15 v2.4 a2,2 0 0 1 -2,2 h-11 a2,2 0 0 1 -2,-2 z" fill="#b9480e"/>
<text x="451.8" y="561.6" font-size="8.6" fill="#fff" font-weight="bold" text-anchor="middle" >F</text>
<text x="451.6" y="566.9" font-size="2.6" fill="#fff" font-weight="bold" text-anchor="middle" >FREE</text>
<rect x="446.6" y="570.4" width="10.6" height="2.6" rx="1.3" fill="#2ec4d6"/>
<path d="M476.4,557.4 l9.6,-1.6 l2.8,9.6 l-10.4,2.4 l-4.6,-2.6 z" fill="#ece94e"/><path d="M476.4,557.4 l2,10.4 l-4.6,-2.6z" fill="#c9c83a"/><path d="M477.4,557 q1,-4.6 5.6,-4.6 q3.6,0.4 4.4,4.4" fill="none" stroke="#f2f2e8" stroke-width="1.1"/>
<path d="M504,562.6 l7.4,-6.4 h-4 l1.2,-1.4 h3.6 l1,-1 l1.6,1 l-1,1 q5.8,2.4 5.8,6.4 q-0.4,4.4 -5.6,4.6 q-4.6,0 -5.6,-3.6 l-2.4,1.6 z" fill="#ef7f1c"/><circle cx="513.6" cy="561.6" r="3.2" fill="#fff"/><circle cx="513.6" cy="561.6" r="2" fill="#2a5ea8"/>
<path d="M539.6,552 l6.8,3.6 l1,7.4 l-5.2,5 l-7.2,-1.6 l-3,-6.6 l3.2,-6 z" fill="#8c97c2"/><path d="M539.6,552 l6.8,3.6 l-4.6,4.4 z" fill="#e46868"/><path d="M546.4,555.6 l1,7.4 l-5.600,-3 z" fill="#b4506a"/><path d="M541.8,560 l5.600,3 l-5.200,5 l-3,-4 z" fill="#7480b0"/><path d="M535.2,553.800 l4.400,-1.800 l2.200,8 l-6,2 z" fill="#a8b2d8"/>
<rect x="561.8" y="552.2" width="15.2" height="15.4" fill="#111"/><circle cx="569.4" cy="560" r="5.8" fill="none" stroke="#d8d8d8" stroke-width="1"/><circle cx="569.4" cy="560" r="4.2" fill="none" stroke="#888" stroke-width="0.8"/><circle cx="569.4" cy="560" r="2.8" fill="#2aa89a"/>
<rect x="591.0" y="552.2" width="15.2" height="15.4" fill="#111"/><circle cx="598.6" cy="560" r="5.8" fill="none" stroke="#d8d8d8" stroke-width="1"/><circle cx="598.6" cy="560" r="4.2" fill="none" stroke="#888" stroke-width="0.8"/><circle cx="598.6" cy="560" r="2.8" fill="#d84a3a"/>
<rect x="620.2" y="552" width="15" height="15.2" rx="1.4" fill="#2fa4ea"/><path d="M620.2,567.2 l7.6,-15.2 h-6.200 q-1.400,0 -1.400,1.400 z" fill="#1a58ac"/><path d="M623.400,565.400 l6.400,-12 l1.600,0 l-6.400,12 z M626,565.400 h8 v-1.200 h-7.400 z" fill="#123c80"/>
<rect x="625.6" y="570.8" width="4" height="1.4" rx="0.7" fill="#9a9a9a"/>
<rect x="649.6" y="552" width="14.2" height="16" rx="1.4" fill="#e0284c"/><path d="M649.6,563.4 h14.2 v3.2 a1.4,1.4 0 0 1 -1.400,1.400 h-11.400 a1.400,1.400 0 0 1 -1.400,-1.400 z" fill="#a01432"/>
<text x="656.8" y="562" font-size="8.6" fill="#fff" font-weight="bold" text-anchor="middle" >A</text>
<text x="656.8" y="567.1" font-size="2.8" fill="#fff" font-weight="bold" text-anchor="middle" >CAD</text>
<rect x="673" y="544" width="1" height="32" fill="#444"/>
<rect x="682.6" y="552.4" width="14.2" height="14.6" rx="2" fill="#2d7fe0"/><path d="M682.6,563.400 l6.600,-6.400 l7.600,7 v1.400 a2,2 0 0 1 -2,2 h-10.200 a2,2 0 0 1 -2,-2 z" fill="#4cc0f4"/><path d="M682.6,565 l5,-4.600 l6.400,6.600 h-9.400 a2,2 0 0 1 -2,-2 z" fill="#7adcf8"/><circle cx="693.2" cy="556" r="1.3" fill="#fff"/>
<rect x="687.8" y="570.8" width="4" height="1.4" rx="0.7" fill="#9a9a9a"/>
<circle cx="715.2" cy="560" r="1" fill="#f0f0f0"/>
<circle cx="719.4" cy="560" r="1" fill="#f0f0f0"/>
<circle cx="723.6" cy="560" r="1" fill="#f0f0f0"/>
<rect x="735" y="544" width="1" height="32" fill="#444"/>
<path d="M781.8,561.6 l3.6,-3.600 l3.600,3.600" fill="none" stroke="#eeeeee" stroke-width="1.1"/>
<rect x="801.8" y="555" width="10.6" height="10" rx="1" fill="#1a8ce6"/><path d="M804,557.600 q0,-0.800 0.800,-0.800 h4.600 q0.800,0 0.800,0.800 v3 q0,0.800 -0.800,0.800 h-1.600 l-1.400,1.600 v-1.600 h-1.600 q-0.800,0 -0.800,-0.800 z" fill="#fff"/><circle cx="807.2" cy="559" r="0.9" fill="#1a8ce6"/>
<rect x="826" y="556.8" width="4.600" height="8.400" rx="1" fill="none" stroke="#cfcfcf" stroke-width="0.9"/><rect x="827" y="554.600" width="2.600" height="2.200" fill="none" stroke="#cfcfcf" stroke-width="0.8"/><path d="M830.600,565 q1.400,0 1.600,-1.400" stroke="#aaa" stroke-width="0.7" fill="none"/>
<path d="M846.400,563.800 a2.400,2.400 0 0 1 0.200,-4.800 a3.400,3.400 0 0 1 6.200,-0.600 a2.800,2.800 0 0 1 0.400,5.400 z" fill="#9a9a9a"/><path d="M845,556.800 l9.600,7.600" stroke="#1f1f1f" stroke-width="1.6"/><path d="M845.400,557.400 l9.200,7.200" stroke="#9a9a9a" stroke-width="0.8"/>
<rect x="865.4" y="555.8" width="10.400" height="8.600" rx="1.4" fill="none" stroke="#eeeeee" stroke-width="0.9"/><path d="M865.400,561.400 h10.400 M870.600,561.400 v3" stroke="#eeeeee" stroke-width="0.8"/>
<text x="889.4" y="563" font-size="7" fill="#eeeeee" font-weight="normal" text-anchor="start" textLength="13.6" lengthAdjust="spacingAndGlyphs" >FRA</text>
<path d="M915.600,558.600 a7.600,7.600 0 0 1 10.800,0 M917.400,560.600 a5,5 0 0 1 7.200,0 M919.200,562.400 a2.600,2.600 0 0 1 3.600,0" fill="none" stroke="#eeeeee" stroke-width="0.9"/><circle cx="921" cy="563.800" r="0.8" fill="#eeeeee"/>
<path d="M932.400,558.400 h2 l2.600,-2.400 v8 l-2.600,-2.400 h-2 z" fill="none" stroke="#eeeeee" stroke-width="0.8" stroke-linejoin="round"/><path d="M938.800,557.800 q1.600,2.200 0,4.400" fill="none" stroke="#eeeeee" stroke-width="0.7"/><path d="M940.600,556.400 q2.600,3.600 0,7.200" fill="none" stroke="#777" stroke-width="0.7"/>
<rect x="948.6" y="557" width="9.400" height="6.600" rx="1.2" fill="#eeeeee"/><rect x="958.200" y="558.800" width="1.200" height="3" fill="#eeeeee"/><path d="M948,555 l3,3.400 l-1.400,1 z" fill="#eeeeee"/>
</svg></div></body></html>
